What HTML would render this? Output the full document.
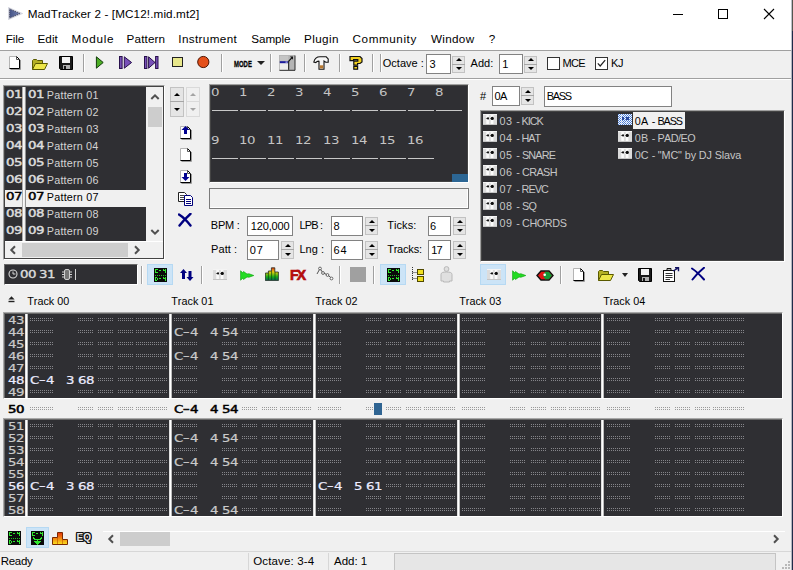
<!DOCTYPE html><html><head><meta charset="utf-8"><title>MadTracker 2</title><style>
*{box-sizing:border-box;margin:0;padding:0}
html,body{width:793px;height:570px;overflow:hidden;background:#f0f0f0}
body{position:relative;font-family:"Liberation Sans",sans-serif;font-size:11px;color:#000}
.a{position:absolute}
.t{position:absolute;white-space:nowrap;line-height:1}
.ui{font-family:"Liberation Sans",sans-serif;font-size:11.6px;color:#000;letter-spacing:-0.1px}
.th{font-family:"Liberation Sans",sans-serif;font-size:11px;color:#000}
.px{font-family:"DejaVu Sans","Liberation Sans",sans-serif;font-size:10.5px;line-height:12px;display:inline-block;transform:scaleX(1.27);transform-origin:0 0;white-space:pre;position:absolute}
.px i{display:inline-block;width:6.3px;text-align:center;font-style:normal}
.px i.h{transform:translate(0.4px,-1px) scaleX(1.45)}
.dark{background:#2f2f33}
.inp{position:absolute;background:#fff;border:1px solid #828282}
.inp span{position:absolute;left:4px;top:4px;line-height:1;font-size:11px;white-space:nowrap}
.spin{position:absolute;width:13px;background:#f0f0f0}
.spin i{position:absolute;left:0;width:13px;border:1px solid #adadad;background:#e1e1e1}
.spin b{position:absolute;left:3px;width:0;height:0;border-left:3.5px solid transparent;border-right:3.5px solid transparent}
.sep{position:absolute;width:1px;background:#a0a0a0;box-shadow:1px 0 0 #fff}
.dots{position:absolute;height:3px;background-image:radial-gradient(circle at 0.5px 0.5px,#85858a 0.6px,transparent 0.7px);background-size:2px 2px}
.ldots{position:absolute;height:3px;background-image:radial-gradient(circle at 0.5px 0.5px,#9a9a9a 0.55px,transparent 0.7px);background-size:2px 2px}
</style></head><body>
<div class="a" style="left:0;top:0;width:793px;height:50px;background:#fff"></div>
<svg class="a" style="left:8px;top:7px" width="15" height="13" viewBox="0 0 15 13"><defs><linearGradient id="ti" x1="0" y1="0" x2="1" y2="0"><stop offset="0" stop-color="#465488"/><stop offset="1" stop-color="#7482ae"/></linearGradient></defs><path d="M0.700 0.700 L14 6.500 L0.700 12.300 Z" fill="#d4d6e0" stroke="#d4d6e0" stroke-width="1.200"/><path d="M1.600 1.900 L12.200 6.500 L1.600 11.100 Z" fill="url(#ti)" stroke="#3c3c50" stroke-width="0.900" stroke-dasharray="1 1"/></svg>
<div class="t"  style="left:27.64px;top:8.25px;font-size:11.7px;letter-spacing:0.114px;color:#000;font-weight:normal;font-kerning:none;">MadTracker 2 - [MC12!.mid.mt2]</div>
<div class="a" style="left:673px;top:14px;width:10px;height:1px;background:#000"></div>
<div class="a" style="left:718px;top:9px;width:10px;height:10px;border:1px solid #000"></div>
<svg class="a" style="left:763px;top:8px" width="12" height="12" viewBox="0 0 12 12"><path d="M1 1 L11 11 M11 1 L1 11" stroke="#000" stroke-width="1.1" fill="none"/></svg>
<div class="t"  style="left:5.74px;top:33.35px;font-size:11.7px;letter-spacing:-0.091px;color:#000;font-weight:normal;font-kerning:none;">File</div>
<div class="t"  style="left:37.54px;top:33.35px;font-size:11.7px;letter-spacing:0.028px;color:#000;font-weight:normal;font-kerning:none;">Edit</div>
<div class="t"  style="left:71.44px;top:33.35px;font-size:11.7px;letter-spacing:0.741px;color:#000;font-weight:normal;font-kerning:none;">Module</div>
<div class="t"  style="left:126.54px;top:33.35px;font-size:11.7px;letter-spacing:0.150px;color:#000;font-weight:normal;font-kerning:none;">Pattern</div>
<div class="t"  style="left:178.32px;top:33.35px;font-size:11.7px;letter-spacing:0.366px;color:#000;font-weight:normal;font-kerning:none;">Instrument</div>
<div class="t"  style="left:251.27px;top:33.35px;font-size:11.7px;letter-spacing:-0.084px;color:#000;font-weight:normal;font-kerning:none;">Sample</div>
<div class="t"  style="left:304.04px;top:33.35px;font-size:11.7px;letter-spacing:0.379px;color:#000;font-weight:normal;font-kerning:none;">Plugin</div>
<div class="t"  style="left:352.61px;top:33.35px;font-size:11.7px;letter-spacing:0.569px;color:#000;font-weight:normal;font-kerning:none;">Community</div>
<div class="t"  style="left:430.95px;top:33.35px;font-size:11.7px;letter-spacing:0.322px;color:#000;font-weight:normal;font-kerning:none;">Window</div>
<div class="t"  style="left:488.72px;top:33.35px;font-size:11.7px;letter-spacing:0.000px;color:#000;font-weight:normal;font-kerning:none;">?</div>
<div class="a" style="left:0;top:50px;width:791px;height:1px;background:#a0a0a0"></div>
<div class="a" style="left:0;top:78px;width:791px;height:1px;background:#a0a0a0"></div>
<div class="a" style="left:0;top:79px;width:791px;height:1px;background:#fff"></div>
<svg class="a" style="left:9px;top:56px" width="12" height="14" viewBox="0 0 12 14"><path d="M0.5 0.5 H7.5 L10.5 3.5 V12.5 H0.5Z" fill="#fff" stroke="#b4b4b4" stroke-width="1"/><path d="M7.5 0.5 L10.5 3.5 V12.5 H0.5" fill="none" stroke="#000" stroke-width="1"/><path d="M7.5 0.5 V3.5 H10.5" fill="none" stroke="#555" stroke-width="1"/><path d="M11.5 4 V13.5 H1.5" fill="none" stroke="#9a9a9a" stroke-width="1"/></svg>
<svg class="a" style="left:32px;top:59px" width="16" height="11" viewBox="0 0 16 11"><path d="M0.5 10.5 V1.5 L1.5 0.5 H4.5 L5.5 1.5 H10.5 V4.5" fill="#b4b024" stroke="#5a5a00" stroke-width="1"/><path d="M0.5 10.5 L3.5 4.5 H15.5 L12.5 10.5Z" fill="#ece648" stroke="#5a5a00" stroke-width="1"/></svg>
<svg class="a" style="left:59px;top:56px" width="15" height="14" viewBox="0 0 15 14"><path d="M0.5 0.5 H13.5 V13.5 H1.5 L0.5 12.5Z" fill="#1a1a1a" stroke="#000" stroke-width="1"/><rect x="3" y="1" width="8" height="6" fill="#f4f4f4"/><rect x="4" y="9" width="7" height="4" fill="#b0b0b0"/><rect x="5" y="10" width="2" height="3" fill="#1a1a1a"/></svg>
<div class="sep" style="left:83px;top:54px;height:18px"></div>
<svg class="a" style="left:95px;top:56px" width="10" height="13" viewBox="0 0 10 13"><path d="M1.400 0.800 L8.200 6.500 L1.400 12.200Z" fill="#4cae24" stroke="#143c0c" stroke-width="1"/></svg>
<svg class="a" style="left:119px;top:56px" width="14" height="13" viewBox="0 0 14 13"><rect x="0.5" y="0.5" width="2.6" height="12" fill="#7850b8" stroke="#28104c" stroke-width="1"/><path d="M5.3 0.8 L12.6 6.5 L5.3 12.2Z" fill="#7850b8" stroke="#28104c" stroke-width="1"/></svg>
<svg class="a" style="left:144px;top:56px" width="15" height="13" viewBox="0 0 15 13"><rect x="0.5" y="0.5" width="2.4" height="12" fill="#7850b8" stroke="#28104c" stroke-width="1"/><path d="M4.6 0.8 L11 6.5 L4.6 12.2Z" fill="#7850b8" stroke="#28104c" stroke-width="1"/><rect x="11.6" y="0.5" width="2.4" height="12" fill="#7850b8" stroke="#28104c" stroke-width="1"/></svg>
<div class="a" style="left:172px;top:57px;width:11px;height:10px;background:#e8e88c;border:1px solid #222"></div>
<svg class="a" style="left:197px;top:55px" width="13" height="14" viewBox="0 0 13 14"><circle cx="6.3" cy="7" r="5.6" fill="#e4501a" stroke="#501400" stroke-width="1"/></svg>
<div class="sep" style="left:221px;top:54px;height:18px"></div>
<div class="t" style="left:233.6px;top:58.6px;font-size:9.6px;font-weight:bold;font-kerning:none;transform:scaleX(0.62);transform-origin:0 0;color:#000;-webkit-text-stroke:0.3px #000">MODE</div>
<div class="a" style="left:257px;top:61px;width:0;height:0;border-left:4px solid transparent;border-right:4px solid transparent;border-top:4.5px solid #222"></div>
<div class="sep" style="left:270px;top:54px;height:18px"></div>
<svg class="a" style="left:279px;top:55px" width="17" height="16" viewBox="0 0 17 16"><rect x="0" y="0" width="16" height="15.500" fill="#b4b4b4"/><rect x="0.800" y="0.800" width="8.500" height="5" fill="#c4c4c4"/><path d="M16 0.500V15.300H0.500" fill="none" stroke="#2c2c2c" stroke-width="1"/><rect x="0.800" y="8" width="8.400" height="6.600" fill="#ececec"/><rect x="0.800" y="6.200" width="8.400" height="2" fill="#1a1a9c"/><rect x="6.500" y="6.600" width="2" height="1" fill="#d0d0f0"/><path d="M9.700 6V14.800" stroke="#111" stroke-width="1"/><path d="M9.700 6.200 L12.800 2.800" stroke="#111" stroke-width="1.200" fill="none"/><path d="M11 1.600 H14 V4.800 Z" fill="#111"/></svg>
<div class="sep" style="left:304px;top:54px;height:18px"></div>
<svg class="a" style="left:313px;top:56px" width="16" height="14" viewBox="0 0 16 14"><path d="M0.800 6 C1.500 3 4 0.800 7 0.800 H13.200 L15.200 3 V6.200 H12.800 L11 5 V13.200 H6 V5.200 C4.500 5 3.600 5.600 2.800 6.600 Z" fill="#f6f6f6" stroke="#111" stroke-width="1.100"/><rect x="6.800" y="9.300" width="3.400" height="3.200" fill="#b87830"/></svg>
<div class="sep" style="left:339px;top:54px;height:18px"></div>
<svg class="a" style="left:349px;top:55px" width="14" height="15" viewBox="0 0 14 15"><path d="M1 1.5 H11 L13 3.5 V7 L11 8.5 H8.6 V10.2 H4.8 V6.2 H8.8 V4.6 H4.6 V5.6 H1Z" fill="#f2d020" stroke="#111" stroke-width="1.2"/><rect x="4.8" y="11.4" width="3.8" height="2.8" fill="#f2d020" stroke="#111" stroke-width="1.2"/></svg>
<div class="sep" style="left:372px;top:54px;height:18px"></div>
<div class="sep" style="left:380px;top:54px;height:18px"></div>
<div class="t"  style="left:382.78px;top:57.50px;font-size:11px;letter-spacing:0.009px;color:#000;font-weight:normal;font-kerning:none;">Octave :</div>
<div class="inp" style="left:426px;top:54px;width:25px;height:20px"></div><div class="t"  style="left:429.58px;top:58.50px;font-size:11px;letter-spacing:0.000px;color:#000;font-weight:normal;font-kerning:none;">3</div>
<div class="a" style="left:452px;top:55.5px;height:17.5px;width:13px;background:#e5e5e5;border:1px solid #c2c2c2"></div><div class="a" style="left:452px;top:63.75px;height:1px;width:13px;background:#a6a6a6"></div><div class="a" style="left:455.5px;top:58.075px;width:0;height:0;border-left:3px solid transparent;border-right:3px solid transparent;border-bottom:3.2px solid #000"></div><div class="a" style="left:455.5px;top:67.225px;width:0;height:0;border-left:3px solid transparent;border-right:3px solid transparent;border-top:3.2px solid #000"></div>
<div class="t"  style="left:470.58px;top:57.50px;font-size:11px;letter-spacing:-0.001px;color:#000;font-weight:normal;font-kerning:none;">Add:</div>
<div class="inp" style="left:499px;top:54px;width:24px;height:20px"></div><div class="t"  style="left:502.16px;top:58.50px;font-size:11px;letter-spacing:0.000px;color:#000;font-weight:normal;font-kerning:none;">1</div>
<div class="a" style="left:524px;top:55.5px;height:17.5px;width:13px;background:#e5e5e5;border:1px solid #c2c2c2"></div><div class="a" style="left:524px;top:63.75px;height:1px;width:13px;background:#a6a6a6"></div><div class="a" style="left:527.5px;top:58.075px;width:0;height:0;border-left:3px solid transparent;border-right:3px solid transparent;border-bottom:3.2px solid #000"></div><div class="a" style="left:527.5px;top:67.225px;width:0;height:0;border-left:3px solid transparent;border-right:3px solid transparent;border-top:3.2px solid #000"></div>
<div class="a" style="left:547px;top:57px;width:13px;height:13px;background:#fff;border:1px solid #333"></div>
<div class="t"  style="left:562.60px;top:57.50px;font-size:11px;letter-spacing:-0.784px;color:#000;font-weight:normal;font-kerning:none;">MCE</div>
<div class="a" style="left:595px;top:57px;width:13px;height:13px;background:#fff;border:1px solid #333"></div>
<svg class="a" style="left:595px;top:57px" width="13" height="13" viewBox="0 0 13 13"><path d="M2.8 6.4 L5.2 9 L10.2 3.2" fill="none" stroke="#222" stroke-width="1.2"/></svg>
<div class="t"  style="left:610.90px;top:57.50px;font-size:11px;letter-spacing:-0.318px;color:#000;font-weight:normal;font-kerning:none;">KJ</div>
<div class="a" style="left:3px;top:85px;width:162px;height:175px;background:#f0f0f0;border-top:1px solid #a0a0a0;border-left:1px solid #a0a0a0;border-right:1px solid #fff;border-bottom:1px solid #fff;"><div class="a" style="left:0;top:0;right:0;bottom:0;border:1px solid #444"></div></div>
<div class="a dark" style="left:5px;top:87px;width:141px;height:154px"></div>
<div class="a" style="left:22px;top:87px;width:4px;height:154px;background:linear-gradient(90deg,#8a8a8a,#fff 40%,#e8e8e8 70%,#555)"></div>
<span class="px" style="left:5.5px;top:88px;color:#dcdcdc;-webkit-text-stroke:0.45px #dcdcdc;"><i>0</i><i>1</i></span>
<span class="px" style="left:27.5px;top:88px;color:#dcdcdc;-webkit-text-stroke:0.45px #dcdcdc;"><i>0</i><i>1</i></span>
<div class="t"  style="left:46.81px;top:89.60px;font-size:10.8px;letter-spacing:0.209px;color:#d4d4d4;font-weight:normal;font-kerning:none;">Pattern 01</div>
<span class="px" style="left:5.5px;top:105px;color:#dcdcdc;-webkit-text-stroke:0.45px #dcdcdc;"><i>0</i><i>2</i></span>
<span class="px" style="left:27.5px;top:105px;color:#dcdcdc;-webkit-text-stroke:0.45px #dcdcdc;"><i>0</i><i>2</i></span>
<div class="t"  style="left:46.81px;top:106.60px;font-size:10.8px;letter-spacing:0.211px;color:#d4d4d4;font-weight:normal;font-kerning:none;">Pattern 02</div>
<span class="px" style="left:5.5px;top:122px;color:#dcdcdc;-webkit-text-stroke:0.45px #dcdcdc;"><i>0</i><i>3</i></span>
<span class="px" style="left:27.5px;top:122px;color:#dcdcdc;-webkit-text-stroke:0.45px #dcdcdc;"><i>0</i><i>3</i></span>
<div class="t"  style="left:46.81px;top:123.60px;font-size:10.8px;letter-spacing:0.203px;color:#d4d4d4;font-weight:normal;font-kerning:none;">Pattern 03</div>
<span class="px" style="left:5.5px;top:139px;color:#dcdcdc;-webkit-text-stroke:0.45px #dcdcdc;"><i>0</i><i>4</i></span>
<span class="px" style="left:27.5px;top:139px;color:#dcdcdc;-webkit-text-stroke:0.45px #dcdcdc;"><i>0</i><i>4</i></span>
<div class="t"  style="left:46.81px;top:140.60px;font-size:10.8px;letter-spacing:0.185px;color:#d4d4d4;font-weight:normal;font-kerning:none;">Pattern 04</div>
<span class="px" style="left:5.5px;top:156px;color:#dcdcdc;-webkit-text-stroke:0.45px #dcdcdc;"><i>0</i><i>5</i></span>
<span class="px" style="left:27.5px;top:156px;color:#dcdcdc;-webkit-text-stroke:0.45px #dcdcdc;"><i>0</i><i>5</i></span>
<div class="t"  style="left:46.81px;top:157.60px;font-size:10.8px;letter-spacing:0.201px;color:#d4d4d4;font-weight:normal;font-kerning:none;">Pattern 05</div>
<span class="px" style="left:5.5px;top:173px;color:#dcdcdc;-webkit-text-stroke:0.45px #dcdcdc;"><i>0</i><i>6</i></span>
<span class="px" style="left:27.5px;top:173px;color:#dcdcdc;-webkit-text-stroke:0.45px #dcdcdc;"><i>0</i><i>6</i></span>
<div class="t"  style="left:46.81px;top:174.60px;font-size:10.8px;letter-spacing:0.203px;color:#d4d4d4;font-weight:normal;font-kerning:none;">Pattern 06</div>
<div class="a" style="left:5px;top:190px;width:17px;height:17px;background:#f0f0f0"></div>
<div class="a" style="left:26px;top:190px;width:120px;height:17px;background:#f0f0f0"></div>
<span class="px" style="left:5.5px;top:190px;color:#000;-webkit-text-stroke:0.45px #000;"><i>0</i><i>7</i></span>
<span class="px" style="left:27.5px;top:190px;color:#000;-webkit-text-stroke:0.45px #000;"><i>0</i><i>7</i></span>
<div class="t"  style="left:46.81px;top:191.60px;font-size:10.8px;letter-spacing:0.211px;color:#000;font-weight:normal;font-kerning:none;">Pattern 07</div>
<span class="px" style="left:5.5px;top:207px;color:#dcdcdc;-webkit-text-stroke:0.45px #dcdcdc;"><i>0</i><i>8</i></span>
<span class="px" style="left:27.5px;top:207px;color:#dcdcdc;-webkit-text-stroke:0.45px #dcdcdc;"><i>0</i><i>8</i></span>
<div class="t"  style="left:46.81px;top:208.60px;font-size:10.8px;letter-spacing:0.202px;color:#d4d4d4;font-weight:normal;font-kerning:none;">Pattern 08</div>
<span class="px" style="left:5.5px;top:224px;color:#dcdcdc;-webkit-text-stroke:0.45px #dcdcdc;"><i>0</i><i>9</i></span>
<span class="px" style="left:27.5px;top:224px;color:#dcdcdc;-webkit-text-stroke:0.45px #dcdcdc;"><i>0</i><i>9</i></span>
<div class="t"  style="left:46.81px;top:225.60px;font-size:10.8px;letter-spacing:0.207px;color:#d4d4d4;font-weight:normal;font-kerning:none;">Pattern 09</div>
<div class="a" style="left:146px;top:87px;width:17px;height:154px;background:#f0f0f0"></div>
<div class="a" style="left:148px;top:107px;width:14px;height:20px;background:#cdcdcd"></div>
<svg class="a" style="left:149.5px;top:93px" width="10" height="8" viewBox="0 0 10 8"><path d="M1.3 6 L5 2.3 L8.7 6" fill="none" stroke="#505050" stroke-width="2"/></svg>
<svg class="a" style="left:149.5px;top:228px" width="10" height="8" viewBox="0 0 10 8"><path d="M1.3 2 L5 5.700 L8.7 2" fill="none" stroke="#505050" stroke-width="2"/></svg>
<div class="a" style="left:5px;top:241px;width:158px;height:17px;background:#f0f0f0;border-top:1px solid #fff"></div>
<div class="a" style="left:22px;top:243px;width:106px;height:14px;background:#cdcdcd"></div>
<svg class="a" style="left:9px;top:244.5px" width="8" height="10" viewBox="0 0 8 10"><path d="M6 1.3 L2.3 5 L6 8.700" fill="none" stroke="#505050" stroke-width="2"/></svg>
<svg class="a" style="left:133px;top:244.5px" width="8" height="10" viewBox="0 0 8 10"><path d="M2 1.3 L5.700 5 L2 8.700" fill="none" stroke="#505050" stroke-width="2"/></svg>
<div class="a" style="left:170px;top:87px;height:29.5px;width:13.5px;background:#e5e5e5;border:1px solid #c2c2c2"></div><div class="a" style="left:170px;top:101.25px;height:1px;width:13.5px;background:#a6a6a6"></div><div class="a" style="left:173.75px;top:92.575px;width:0;height:0;border-left:3px solid transparent;border-right:3px solid transparent;border-bottom:3.2px solid #000"></div><div class="a" style="left:173.75px;top:107.725px;width:0;height:0;border-left:3px solid transparent;border-right:3px solid transparent;border-top:3.2px solid #000"></div>
<div class="a" style="left:186px;top:87px;height:29.5px;width:13.5px;background:#f0f0f0;border:1px solid #dadada"></div><div class="a" style="left:186px;top:101.25px;height:1px;width:13.5px;background:#dadada"></div><div class="a" style="left:189.75px;top:92.575px;width:0;height:0;border-left:3px solid transparent;border-right:3px solid transparent;border-bottom:3.2px solid #a4a4a4"></div><div class="a" style="left:189.75px;top:107.725px;width:0;height:0;border-left:3px solid transparent;border-right:3px solid transparent;border-top:3.2px solid #a4a4a4"></div>
<svg class="a" style="left:180px;top:126px" width="12" height="14" viewBox="0 0 12 14"><path d="M0.5 0.5 H7.5 L10.5 3.5 V12.5 H0.5Z" fill="#fff" stroke="#b4b4b4" stroke-width="1"/><path d="M7.5 0.5 L10.5 3.5 V12.5 H0.5" fill="none" stroke="#000" stroke-width="1"/><path d="M7.5 0.5 V3.5 H10.5" fill="none" stroke="#555" stroke-width="1"/><path d="M11.5 4 V13.5 H1.5" fill="none" stroke="#9a9a9a" stroke-width="1"/></svg>
<svg class="a" style="left:180px;top:126px" width="12" height="10" viewBox="0 0 12 10"><path d="M5.5 0 L9.5 4 H7 V8 H4 V4 H1.5Z" fill="#000090"/></svg>
<svg class="a" style="left:180px;top:148px" width="12" height="14" viewBox="0 0 12 14"><path d="M0.5 0.5 H7.5 L10.5 3.5 V12.5 H0.5Z" fill="#fff" stroke="#b4b4b4" stroke-width="1"/><path d="M7.5 0.5 L10.5 3.5 V12.5 H0.5" fill="none" stroke="#000" stroke-width="1"/><path d="M7.5 0.5 V3.5 H10.5" fill="none" stroke="#555" stroke-width="1"/><path d="M11.5 4 V13.5 H1.5" fill="none" stroke="#9a9a9a" stroke-width="1"/></svg>
<svg class="a" style="left:180px;top:170px" width="12" height="14" viewBox="0 0 12 14"><path d="M0.5 0.5 H7.5 L10.5 3.5 V12.5 H0.5Z" fill="#fff" stroke="#b4b4b4" stroke-width="1"/><path d="M7.5 0.5 L10.5 3.5 V12.5 H0.5" fill="none" stroke="#000" stroke-width="1"/><path d="M7.5 0.5 V3.5 H10.5" fill="none" stroke="#555" stroke-width="1"/><path d="M11.5 4 V13.5 H1.5" fill="none" stroke="#9a9a9a" stroke-width="1"/></svg>
<svg class="a" style="left:180px;top:172px" width="12" height="10" viewBox="0 0 12 10"><path d="M5.5 9 L9.5 5 H7 V1 H4 V5 H1.5Z" fill="#000090"/></svg>
<svg class="a" style="left:178px;top:192px" width="16" height="14" viewBox="0 0 16 14"><path d="M0.5 0.5 H6.5 L8.5 2.5 V9.5 H0.5Z" fill="#fff" stroke="#222"/><path d="M2 3.5H6M2 5.5H7M2 7.5H7" stroke="#444" stroke-width="1"/><path d="M6.5 3.5 H12.5 L14.5 5.5 V13.5 H6.5Z" fill="#fff" stroke="#00007a"/><path d="M8 7.5H13M8 9.5H13M8 11.5H13" stroke="#00007a" stroke-width="1"/></svg>
<svg class="a" style="left:178px;top:213px" width="15" height="14" viewBox="0 0 15 14"><path d="M1 1.5 C5 4 9 8 12.5 12.5 M12.5 0.8 C9 4 5 8 1.5 12.5" stroke="#000080" stroke-width="2.400" fill="none" stroke-linecap="round"/></svg>
<div class="a" style="left:209px;top:84px;width:260px;height:99px;background:#2f2f33;border-top:1px solid #a0a0a0;border-left:1px solid #a0a0a0;border-right:1px solid #fff;border-bottom:1px solid #fff;"><div class="a" style="left:0;top:0;right:0;bottom:0;border:1px solid #444"></div></div>
<span class="px" style="left:211px;top:86px;color:#c4c4c4;"><i>0</i></span>
<div class="a" style="left:212px;top:110px;width:26px;height:1px;background:#c8c8c8"></div>
<span class="px" style="left:239px;top:86px;color:#c4c4c4;"><i>1</i></span>
<div class="a" style="left:240px;top:110px;width:26px;height:1px;background:#c8c8c8"></div>
<span class="px" style="left:267px;top:86px;color:#c4c4c4;"><i>2</i></span>
<div class="a" style="left:268px;top:110px;width:26px;height:1px;background:#c8c8c8"></div>
<span class="px" style="left:295px;top:86px;color:#c4c4c4;"><i>3</i></span>
<div class="a" style="left:296px;top:110px;width:26px;height:1px;background:#c8c8c8"></div>
<span class="px" style="left:323px;top:86px;color:#c4c4c4;"><i>4</i></span>
<div class="a" style="left:324px;top:110px;width:26px;height:1px;background:#c8c8c8"></div>
<span class="px" style="left:351px;top:86px;color:#c4c4c4;"><i>5</i></span>
<div class="a" style="left:352px;top:110px;width:26px;height:1px;background:#c8c8c8"></div>
<span class="px" style="left:379px;top:86px;color:#c4c4c4;"><i>6</i></span>
<div class="a" style="left:380px;top:110px;width:26px;height:1px;background:#c8c8c8"></div>
<span class="px" style="left:407px;top:86px;color:#c4c4c4;"><i>7</i></span>
<div class="a" style="left:408px;top:110px;width:26px;height:1px;background:#c8c8c8"></div>
<span class="px" style="left:435px;top:86px;color:#c4c4c4;"><i>8</i></span>
<div class="a" style="left:436px;top:110px;width:26px;height:1px;background:#c8c8c8"></div>
<span class="px" style="left:211px;top:134px;color:#c4c4c4;"><i>9</i></span>
<div class="a" style="left:212px;top:158px;width:26px;height:1px;background:#c8c8c8"></div>
<span class="px" style="left:239px;top:134px;color:#c4c4c4;"><i>1</i><i>0</i></span>
<div class="a" style="left:240px;top:158px;width:26px;height:1px;background:#c8c8c8"></div>
<span class="px" style="left:267px;top:134px;color:#c4c4c4;"><i>1</i><i>1</i></span>
<div class="a" style="left:268px;top:158px;width:26px;height:1px;background:#c8c8c8"></div>
<span class="px" style="left:295px;top:134px;color:#c4c4c4;"><i>1</i><i>2</i></span>
<div class="a" style="left:296px;top:158px;width:26px;height:1px;background:#c8c8c8"></div>
<span class="px" style="left:323px;top:134px;color:#c4c4c4;"><i>1</i><i>3</i></span>
<div class="a" style="left:324px;top:158px;width:26px;height:1px;background:#c8c8c8"></div>
<span class="px" style="left:351px;top:134px;color:#c4c4c4;"><i>1</i><i>4</i></span>
<div class="a" style="left:352px;top:158px;width:26px;height:1px;background:#c8c8c8"></div>
<span class="px" style="left:379px;top:134px;color:#c4c4c4;"><i>1</i><i>5</i></span>
<div class="a" style="left:380px;top:158px;width:26px;height:1px;background:#c8c8c8"></div>
<span class="px" style="left:407px;top:134px;color:#c4c4c4;"><i>1</i><i>6</i></span>
<div class="a" style="left:408px;top:158px;width:26px;height:1px;background:#c8c8c8"></div>
<div class="a" style="left:452px;top:174px;width:16px;height:8px;background:#2c6694"></div>
<div class="a" style="left:209px;top:188px;width:260px;height:21px;background:#f1f1f1;border:1px solid #7a7a7a;box-shadow:inset -1px -1px 0 #fff"></div>
<div class="t"  style="left:210.80px;top:219.50px;font-size:11px;letter-spacing:-0.236px;color:#000;font-weight:normal;font-kerning:none;">BPM :</div>
<div class="inp" style="left:247px;top:216px;width:46px;height:20px"></div><div class="t"  style="left:250.86px;top:220.50px;font-size:11px;letter-spacing:-0.166px;color:#000;font-weight:normal;font-kerning:none;">120,000</div>
<div class="t"  style="left:299.40px;top:219.50px;font-size:11px;letter-spacing:-0.824px;color:#000;font-weight:normal;font-kerning:none;">LPB :</div>
<div class="inp" style="left:331px;top:216px;width:32px;height:20px"></div><div class="t"  style="left:333.52px;top:220.50px;font-size:11px;letter-spacing:0.000px;color:#000;font-weight:normal;font-kerning:none;">8</div>
<div class="a" style="left:365px;top:217px;height:17.5px;width:13px;background:#e5e5e5;border:1px solid #c2c2c2"></div><div class="a" style="left:365px;top:225.25px;height:1px;width:13px;background:#a6a6a6"></div><div class="a" style="left:368.5px;top:219.575px;width:0;height:0;border-left:3px solid transparent;border-right:3px solid transparent;border-bottom:3.2px solid #000"></div><div class="a" style="left:368.5px;top:228.725px;width:0;height:0;border-left:3px solid transparent;border-right:3px solid transparent;border-top:3.2px solid #000"></div>
<div class="t"  style="left:387.15px;top:219.50px;font-size:11px;letter-spacing:0.086px;color:#000;font-weight:normal;font-kerning:none;">Ticks:</div>
<div class="inp" style="left:428px;top:216px;width:23px;height:20px"></div><div class="t"  style="left:430.04px;top:220.50px;font-size:11px;letter-spacing:0.000px;color:#000;font-weight:normal;font-kerning:none;">6</div>
<div class="a" style="left:453px;top:217px;height:17.5px;width:13px;background:#e5e5e5;border:1px solid #c2c2c2"></div><div class="a" style="left:453px;top:225.25px;height:1px;width:13px;background:#a6a6a6"></div><div class="a" style="left:456.5px;top:219.575px;width:0;height:0;border-left:3px solid transparent;border-right:3px solid transparent;border-bottom:3.2px solid #000"></div><div class="a" style="left:456.5px;top:228.725px;width:0;height:0;border-left:3px solid transparent;border-right:3px solid transparent;border-top:3.2px solid #000"></div>
<div class="t"  style="left:211.10px;top:243.50px;font-size:11px;letter-spacing:0.046px;color:#000;font-weight:normal;font-kerning:none;">Patt :</div>
<div class="inp" style="left:247px;top:240px;width:32px;height:20px"></div><div class="t"  style="left:249.77px;top:244.50px;font-size:11px;letter-spacing:0.948px;color:#000;font-weight:normal;font-kerning:none;">07</div>
<div class="a" style="left:281px;top:241px;height:17.5px;width:13px;background:#e5e5e5;border:1px solid #c2c2c2"></div><div class="a" style="left:281px;top:249.25px;height:1px;width:13px;background:#a6a6a6"></div><div class="a" style="left:284.5px;top:243.575px;width:0;height:0;border-left:3px solid transparent;border-right:3px solid transparent;border-bottom:3.2px solid #000"></div><div class="a" style="left:284.5px;top:252.725px;width:0;height:0;border-left:3px solid transparent;border-right:3px solid transparent;border-top:3.2px solid #000"></div>
<div class="t"  style="left:299.40px;top:243.50px;font-size:11px;letter-spacing:0.035px;color:#000;font-weight:normal;font-kerning:none;">Lng :</div>
<div class="inp" style="left:331px;top:240px;width:32px;height:20px"></div><div class="t"  style="left:333.44px;top:244.50px;font-size:11px;letter-spacing:0.846px;color:#000;font-weight:normal;font-kerning:none;">64</div>
<div class="a" style="left:365px;top:241px;height:17.5px;width:13px;background:#e5e5e5;border:1px solid #c2c2c2"></div><div class="a" style="left:365px;top:249.25px;height:1px;width:13px;background:#a6a6a6"></div><div class="a" style="left:368.5px;top:243.575px;width:0;height:0;border-left:3px solid transparent;border-right:3px solid transparent;border-bottom:3.2px solid #000"></div><div class="a" style="left:368.5px;top:252.725px;width:0;height:0;border-left:3px solid transparent;border-right:3px solid transparent;border-top:3.2px solid #000"></div>
<div class="t"  style="left:387.15px;top:243.50px;font-size:11px;letter-spacing:-0.201px;color:#000;font-weight:normal;font-kerning:none;">Tracks:</div>
<div class="inp" style="left:428px;top:240px;width:23px;height:20px"></div><div class="t"  style="left:431.16px;top:244.50px;font-size:11px;letter-spacing:-0.744px;color:#000;font-weight:normal;font-kerning:none;">17</div>
<div class="a" style="left:453px;top:241px;height:17.5px;width:13px;background:#e5e5e5;border:1px solid #c2c2c2"></div><div class="a" style="left:453px;top:249.25px;height:1px;width:13px;background:#a6a6a6"></div><div class="a" style="left:456.5px;top:243.575px;width:0;height:0;border-left:3px solid transparent;border-right:3px solid transparent;border-bottom:3.2px solid #000"></div><div class="a" style="left:456.5px;top:252.725px;width:0;height:0;border-left:3px solid transparent;border-right:3px solid transparent;border-top:3.2px solid #000"></div>
<div class="t"  style="left:479.95px;top:90.50px;font-size:11px;letter-spacing:0.000px;color:#000;font-weight:normal;font-kerning:none;">#</div>
<div class="inp" style="left:492px;top:86px;width:28px;height:20px"></div><div class="t"  style="left:494.57px;top:90.50px;font-size:11px;letter-spacing:-0.603px;color:#000;font-weight:normal;font-kerning:none;">0A</div>
<div class="a" style="left:521.3px;top:87px;height:17.5px;width:13px;background:#e5e5e5;border:1px solid #c2c2c2"></div><div class="a" style="left:521.3px;top:95.25px;height:1px;width:13px;background:#a6a6a6"></div><div class="a" style="left:524.8px;top:89.575px;width:0;height:0;border-left:3px solid transparent;border-right:3px solid transparent;border-bottom:3.2px solid #000"></div><div class="a" style="left:524.8px;top:98.725px;width:0;height:0;border-left:3px solid transparent;border-right:3px solid transparent;border-top:3.2px solid #000"></div>
<div class="inp" style="left:544px;top:86px;width:128px;height:21px"></div><div class="t"  style="left:546.70px;top:90.50px;font-size:11px;letter-spacing:-1.347px;color:#000;font-weight:normal;font-kerning:none;">BASS</div>
<div class="a" style="left:480px;top:110px;width:305px;height:152px;background:#2f2f33;border-top:1px solid #a0a0a0;border-left:1px solid #a0a0a0;border-right:1px solid #fff;border-bottom:1px solid #fff;"><div class="a" style="left:0;top:0;right:0;bottom:0;border:1px solid #444"></div></div>
<svg class="a" style="left:483px;top:114px" width="14" height="11" viewBox="0 0 14 11"><rect width="14" height="11" fill="#dcdcdc"/><rect x="0" y="0" width="14" height="1" fill="#f4f4f4"/><rect x="0" y="10" width="14" height="1" fill="#c4c4c4"/><rect x="3.300" y="1" width="2.600" height="9" fill="#fbfbfb"/><rect x="7.800" y="1" width="2.600" height="9" fill="#fbfbfb"/><path d="M2.600 4.600 L5.500 3.300 L5.800 5.300 Z" fill="#222"/><circle cx="5" cy="4.500" r="1" fill="#111"/><path d="M7 4.700 L9 3.500 V5.500Z" fill="#333"/><circle cx="9.300" cy="4.400" r="1.550" fill="#0c0c0c"/></svg>
<div class="t"  style="left:499.38px;top:115.60px;font-size:10.8px;letter-spacing:0.597px;color:#c6c6c6;font-weight:normal;font-kerning:none;">03 -</div>
<div class="t"  style="left:521.61px;top:115.60px;font-size:10.8px;letter-spacing:-1.033px;color:#c6c6c6;font-weight:normal;font-kerning:none;">KICK</div>
<svg class="a" style="left:483px;top:131px" width="14" height="11" viewBox="0 0 14 11"><rect width="14" height="11" fill="#dcdcdc"/><rect x="0" y="0" width="14" height="1" fill="#f4f4f4"/><rect x="0" y="10" width="14" height="1" fill="#c4c4c4"/><rect x="3.300" y="1" width="2.600" height="9" fill="#fbfbfb"/><rect x="7.800" y="1" width="2.600" height="9" fill="#fbfbfb"/><path d="M2.600 4.600 L5.500 3.300 L5.800 5.300 Z" fill="#222"/><circle cx="5" cy="4.500" r="1" fill="#111"/><path d="M7 4.700 L9 3.500 V5.500Z" fill="#333"/><circle cx="9.300" cy="4.400" r="1.550" fill="#0c0c0c"/></svg>
<div class="t"  style="left:499.38px;top:132.60px;font-size:10.8px;letter-spacing:0.597px;color:#c6c6c6;font-weight:normal;font-kerning:none;">04 -</div>
<div class="t"  style="left:521.61px;top:132.60px;font-size:10.8px;letter-spacing:-1.083px;color:#c6c6c6;font-weight:normal;font-kerning:none;">HAT</div>
<svg class="a" style="left:483px;top:148px" width="14" height="11" viewBox="0 0 14 11"><rect width="14" height="11" fill="#dcdcdc"/><rect x="0" y="0" width="14" height="1" fill="#f4f4f4"/><rect x="0" y="10" width="14" height="1" fill="#c4c4c4"/><rect x="3.300" y="1" width="2.600" height="9" fill="#fbfbfb"/><rect x="7.800" y="1" width="2.600" height="9" fill="#fbfbfb"/><path d="M2.600 4.600 L5.500 3.300 L5.800 5.300 Z" fill="#222"/><circle cx="5" cy="4.500" r="1" fill="#111"/><path d="M7 4.700 L9 3.500 V5.500Z" fill="#333"/><circle cx="9.300" cy="4.400" r="1.550" fill="#0c0c0c"/></svg>
<div class="t"  style="left:499.38px;top:149.60px;font-size:10.8px;letter-spacing:0.597px;color:#c6c6c6;font-weight:normal;font-kerning:none;">05 -</div>
<div class="t"  style="left:522.01px;top:149.60px;font-size:10.8px;letter-spacing:-0.839px;color:#c6c6c6;font-weight:normal;font-kerning:none;">SNARE</div>
<svg class="a" style="left:483px;top:165px" width="14" height="11" viewBox="0 0 14 11"><rect width="14" height="11" fill="#dcdcdc"/><rect x="0" y="0" width="14" height="1" fill="#f4f4f4"/><rect x="0" y="10" width="14" height="1" fill="#c4c4c4"/><rect x="3.300" y="1" width="2.600" height="9" fill="#fbfbfb"/><rect x="7.800" y="1" width="2.600" height="9" fill="#fbfbfb"/><path d="M2.600 4.600 L5.500 3.300 L5.800 5.300 Z" fill="#222"/><circle cx="5" cy="4.500" r="1" fill="#111"/><path d="M7 4.700 L9 3.500 V5.500Z" fill="#333"/><circle cx="9.300" cy="4.400" r="1.550" fill="#0c0c0c"/></svg>
<div class="t"  style="left:499.38px;top:166.60px;font-size:10.8px;letter-spacing:0.597px;color:#c6c6c6;font-weight:normal;font-kerning:none;">06 -</div>
<div class="t"  style="left:521.95px;top:166.60px;font-size:10.8px;letter-spacing:-0.544px;color:#c6c6c6;font-weight:normal;font-kerning:none;">CRASH</div>
<svg class="a" style="left:483px;top:182px" width="14" height="11" viewBox="0 0 14 11"><rect width="14" height="11" fill="#dcdcdc"/><rect x="0" y="0" width="14" height="1" fill="#f4f4f4"/><rect x="0" y="10" width="14" height="1" fill="#c4c4c4"/><rect x="3.300" y="1" width="2.600" height="9" fill="#fbfbfb"/><rect x="7.800" y="1" width="2.600" height="9" fill="#fbfbfb"/><path d="M2.600 4.600 L5.500 3.300 L5.800 5.300 Z" fill="#222"/><circle cx="5" cy="4.500" r="1" fill="#111"/><path d="M7 4.700 L9 3.500 V5.500Z" fill="#333"/><circle cx="9.300" cy="4.400" r="1.550" fill="#0c0c0c"/></svg>
<div class="t"  style="left:499.38px;top:183.60px;font-size:10.8px;letter-spacing:0.597px;color:#c6c6c6;font-weight:normal;font-kerning:none;">07 -</div>
<div class="t"  style="left:521.61px;top:183.60px;font-size:10.8px;letter-spacing:-0.936px;color:#c6c6c6;font-weight:normal;font-kerning:none;">REVC</div>
<svg class="a" style="left:483px;top:199px" width="14" height="11" viewBox="0 0 14 11"><rect width="14" height="11" fill="#dcdcdc"/><rect x="0" y="0" width="14" height="1" fill="#f4f4f4"/><rect x="0" y="10" width="14" height="1" fill="#c4c4c4"/><rect x="3.300" y="1" width="2.600" height="9" fill="#fbfbfb"/><rect x="7.800" y="1" width="2.600" height="9" fill="#fbfbfb"/><path d="M2.600 4.600 L5.500 3.300 L5.800 5.300 Z" fill="#222"/><circle cx="5" cy="4.500" r="1" fill="#111"/><path d="M7 4.700 L9 3.500 V5.500Z" fill="#333"/><circle cx="9.300" cy="4.400" r="1.550" fill="#0c0c0c"/></svg>
<div class="t"  style="left:499.38px;top:200.60px;font-size:10.8px;letter-spacing:0.597px;color:#c6c6c6;font-weight:normal;font-kerning:none;">08 -</div>
<div class="t"  style="left:522.01px;top:200.60px;font-size:10.8px;letter-spacing:-0.697px;color:#c6c6c6;font-weight:normal;font-kerning:none;">SQ</div>
<svg class="a" style="left:483px;top:216px" width="14" height="11" viewBox="0 0 14 11"><rect width="14" height="11" fill="#dcdcdc"/><rect x="0" y="0" width="14" height="1" fill="#f4f4f4"/><rect x="0" y="10" width="14" height="1" fill="#c4c4c4"/><rect x="3.300" y="1" width="2.600" height="9" fill="#fbfbfb"/><rect x="7.800" y="1" width="2.600" height="9" fill="#fbfbfb"/><path d="M2.600 4.600 L5.500 3.300 L5.800 5.300 Z" fill="#222"/><circle cx="5" cy="4.500" r="1" fill="#111"/><path d="M7 4.700 L9 3.500 V5.500Z" fill="#333"/><circle cx="9.300" cy="4.400" r="1.550" fill="#0c0c0c"/></svg>
<div class="t"  style="left:499.38px;top:217.60px;font-size:10.8px;letter-spacing:0.597px;color:#c6c6c6;font-weight:normal;font-kerning:none;">09 -</div>
<div class="t"  style="left:521.95px;top:217.60px;font-size:10.8px;letter-spacing:-0.352px;color:#c6c6c6;font-weight:normal;font-kerning:none;">CHORDS</div>
<svg class="a" style="left:618px;top:114px" width="14" height="11" viewBox="0 0 14 11" shape-rendering="crispEdges"><defs><pattern id="dz" width="2" height="2" patternUnits="userSpaceOnUse"><rect width="2" height="2" fill="#f4f8ff"/><rect x="0" y="0" width="1" height="1" fill="#4f80d4"/><rect x="1" y="1" width="1" height="1" fill="#4f80d4"/></pattern></defs><rect width="14" height="11" fill="url(#dz)"/><rect x="4" y="3" width="2" height="3" fill="#27479c"/><rect x="8" y="3" width="3" height="3" fill="#27479c"/><rect x="3" y="1" width="1" height="9" fill="#f4f8ff" opacity="0.6"/><rect x="8" y="7" width="1" height="3" fill="#f4f8ff" opacity="0.6"/></svg>
<div class="a" style="left:633px;top:112px;width:52px;height:17px;background:#f0f0f0"></div>
<div class="t"  style="left:634.68px;top:115.60px;font-size:10.8px;letter-spacing:0.265px;color:#000;font-weight:normal;font-kerning:none;">0A -</div>
<div class="t"  style="left:657.41px;top:115.60px;font-size:10.8px;letter-spacing:-1.077px;color:#000;font-weight:normal;font-kerning:none;">BASS</div>
<svg class="a" style="left:618px;top:131px" width="14" height="11" viewBox="0 0 14 11"><rect width="14" height="11" fill="#dcdcdc"/><rect x="0" y="0" width="14" height="1" fill="#f4f4f4"/><rect x="0" y="10" width="14" height="1" fill="#c4c4c4"/><rect x="3.300" y="1" width="2.600" height="9" fill="#fbfbfb"/><rect x="7.800" y="1" width="2.600" height="9" fill="#fbfbfb"/><path d="M2.600 4.600 L5.500 3.300 L5.800 5.300 Z" fill="#222"/><circle cx="5" cy="4.500" r="1" fill="#111"/><path d="M7 4.700 L9 3.500 V5.500Z" fill="#333"/><circle cx="9.300" cy="4.400" r="1.550" fill="#0c0c0c"/></svg>
<div class="t"  style="left:634.68px;top:132.60px;font-size:10.8px;letter-spacing:0.265px;color:#c6c6c6;font-weight:normal;font-kerning:none;">0B -</div>
<div class="t"  style="left:657.41px;top:132.60px;font-size:10.8px;letter-spacing:-0.522px;color:#c6c6c6;font-weight:normal;font-kerning:none;">PAD/EO</div>
<svg class="a" style="left:618px;top:148px" width="14" height="11" viewBox="0 0 14 11"><rect width="14" height="11" fill="#dcdcdc"/><rect x="0" y="0" width="14" height="1" fill="#f4f4f4"/><rect x="0" y="10" width="14" height="1" fill="#c4c4c4"/><rect x="3.300" y="1" width="2.600" height="9" fill="#fbfbfb"/><rect x="7.800" y="1" width="2.600" height="9" fill="#fbfbfb"/><path d="M2.600 4.600 L5.500 3.300 L5.800 5.300 Z" fill="#222"/><circle cx="5" cy="4.500" r="1" fill="#111"/><path d="M7 4.700 L9 3.500 V5.500Z" fill="#333"/><circle cx="9.300" cy="4.400" r="1.550" fill="#0c0c0c"/></svg>
<div class="t"  style="left:634.68px;top:149.60px;font-size:10.8px;letter-spacing:0.066px;color:#c6c6c6;font-weight:normal;font-kerning:none;">0C -</div>
<div class="t"  style="left:657.84px;top:149.60px;font-size:10.8px;letter-spacing:-0.109px;color:#c6c6c6;font-weight:normal;font-kerning:none;">&quot;MC&quot; by DJ Slava</div>
<div class="a" style="left:4px;top:264px;width:134px;height:21px;background:#2f2f33;border-top:1px solid #696969;border-left:1px solid #696969;border-right:1px solid #fff;border-bottom:1px solid #fff"></div>
<svg class="a" style="left:8px;top:269px" width="10" height="10" viewBox="0 0 10 10"><circle cx="5" cy="5" r="4" fill="none" stroke="#d8d8d8" stroke-width="1.1"/><path d="M5 2.5V5H7.4" stroke="#d8d8d8" fill="none"/></svg>
<span class="px" style="left:20px;top:268px;color:#dcdcdc;-webkit-text-stroke:0.35px #dcdcdc;"><i>0</i><i>0</i></span>
<span class="px" style="left:39px;top:268px;color:#dcdcdc;-webkit-text-stroke:0.35px #dcdcdc;"><i>3</i><i>1</i></span>
<svg class="a" style="left:62px;top:269px" width="10" height="11" viewBox="0 0 10 11"><rect x="2.5" y="0.5" width="5" height="10" rx="1.5" fill="#777" stroke="#d0d0d0"/><path d="M0 3H2M0 5.5H2M0 8H2M8 3H10M8 5.5H10M8 8H10" stroke="#d0d0d0"/></svg>
<div class="a" style="left:75px;top:269px;width:1px;height:11px;background:#d0d0d0"></div>
<div class="sep" style="left:141px;top:266px;height:18px"></div>
<div class="a" style="left:147px;top:264px;width:26px;height:21px;background:#cce4f7;border:1px solid #b6d9f3"></div>
<svg class="a" style="left:154px;top:268px" width="13" height="14" viewBox="0 0 13 14" shape-rendering="crispEdges"><rect width="13" height="14" fill="#0a0a0a"/><rect x="1" y="1" width="3" height="1" fill="#2fe62f"/><rect x="1" y="2" width="1" height="1" fill="#2fe62f"/><rect x="1" y="3" width="1" height="1" fill="#2fe62f"/><rect x="1" y="4" width="3" height="1" fill="#2fe62f"/><rect x="5" y="2" width="2" height="1" fill="#2fe62f"/><rect x="9" y="1" width="1" height="1" fill="#2fe62f"/><rect x="11" y="1" width="1" height="1" fill="#2fe62f"/><rect x="9" y="2" width="3" height="1" fill="#2fe62f"/><rect x="11" y="3" width="1" height="1" fill="#2fe62f"/><rect x="11" y="4" width="1" height="1" fill="#2fe62f"/><rect x="1" y="6.5" width="1" height="1" fill="#25b825"/><rect x="3" y="6.5" width="1" height="1" fill="#25b825"/><rect x="5" y="6.5" width="1" height="1" fill="#25b825"/><rect x="7" y="6.5" width="1" height="1" fill="#25b825"/><rect x="9" y="6.5" width="1" height="1" fill="#25b825"/><rect x="11" y="6.5" width="1" height="1" fill="#25b825"/><rect x="1" y="9" width="2" height="1" fill="#2fe62f"/><rect x="1" y="10" width="1" height="1" fill="#2fe62f"/><rect x="3" y="10" width="1" height="1" fill="#2fe62f"/><rect x="1" y="11" width="1" height="1" fill="#2fe62f"/><rect x="3" y="11" width="1" height="1" fill="#2fe62f"/><rect x="1" y="12" width="2" height="1" fill="#2fe62f"/><rect x="5" y="10" width="2" height="1" fill="#2fe62f"/><rect x="9" y="9" width="1" height="1" fill="#2fe62f"/><rect x="11" y="9" width="1" height="1" fill="#2fe62f"/><rect x="9" y="10" width="3" height="1" fill="#2fe62f"/><rect x="11" y="11" width="1" height="1" fill="#2fe62f"/><rect x="11" y="12" width="1" height="1" fill="#2fe62f"/></svg>
<svg class="a" style="left:180px;top:268px" width="14" height="14" viewBox="0 0 14 14"><path d="M3.5 1 L7 5 H5 V11 H2 V5 H0Z" fill="#000080"/><path d="M10 13 L13.5 9 H11.5 V3 H8.5 V9 H6.5Z" fill="#000080"/></svg>
<div class="sep" style="left:201px;top:266px;height:18px"></div>
<svg class="a" style="left:213px;top:269px" width="14" height="11" viewBox="0 0 14 11"><rect width="14" height="11" fill="#dcdcdc"/><rect x="0" y="0" width="14" height="1" fill="#f4f4f4"/><rect x="0" y="10" width="14" height="1" fill="#c4c4c4"/><rect x="3.300" y="1" width="2.600" height="9" fill="#fbfbfb"/><rect x="7.800" y="1" width="2.600" height="9" fill="#fbfbfb"/><path d="M2.600 4.600 L5.500 3.300 L5.800 5.300 Z" fill="#222"/><circle cx="5" cy="4.500" r="1" fill="#111"/><path d="M7 4.700 L9 3.500 V5.500Z" fill="#333"/><circle cx="9.300" cy="4.400" r="1.550" fill="#0c0c0c"/></svg>
<svg class="a" style="left:239.5px;top:269.5px" width="15" height="11" viewBox="0 0 15 11"><path d="M0.600 0.800 L2.500 2.600 L3.600 1.600 L7 4 L9 3.800 L13.800 5.500 L9 7.200 L7 7 L3.600 9.400 L2.500 8.400 L0.600 10.200Z" fill="#22dc22" stroke="#14a814" stroke-width="0.700"/></svg>
<svg class="a" style="left:265px;top:267px" width="14" height="14" viewBox="0 0 14 14"><defs><linearGradient id="gb" gradientUnits="userSpaceOnUse" x1="0" y1="0" x2="0" y2="14"><stop offset="0" stop-color="#e01010"/><stop offset="0.35" stop-color="#e8d010"/><stop offset="0.7" stop-color="#18b018"/><stop offset="0.92" stop-color="#0a6a50"/><stop offset="1" stop-color="#083070"/></linearGradient></defs><path d="M0.400 13.600 V6 H3.400 V4 H6.400 V0.800 H9.800 V5 H13.400 V13.600Z" fill="url(#gb)" stroke="#203020" stroke-width="0.800"/><path d="M3.400 6V13M6.600 4V13M10 5V13" stroke="#104010" stroke-width="0.700"/></svg>
<div class="t" style="left:290px;top:267.500px;font-size:14px;font-weight:bold;color:#b40c0c;letter-spacing:-1.800px;font-kerning:none;-webkit-text-stroke:0.700px #b40c0c">FX</div>
<svg class="a" style="left:316px;top:266px" width="18" height="15" viewBox="0 0 18 15"><path d="M1 8 L4 2.5 L7 7 L11 8.5 L16 12.5" fill="none" stroke="#555" stroke-width="1"/><circle cx="4" cy="2.5" r="1.4" fill="#fff" stroke="#444" stroke-width="0.8"/><circle cx="7" cy="7" r="1.4" fill="#fff" stroke="#444" stroke-width="0.8"/><circle cx="11.5" cy="9" r="1.4" fill="#fff" stroke="#444" stroke-width="0.8"/><circle cx="15.5" cy="12.5" r="1.4" fill="#fff" stroke="#444" stroke-width="0.8"/></svg>
<div class="sep" style="left:339px;top:266px;height:18px"></div>
<div class="a" style="left:350px;top:267px;width:16px;height:15px;background:#a0a0a0"></div>
<div class="sep" style="left:373px;top:266px;height:18px"></div>
<div class="a" style="left:380px;top:264px;width:26px;height:21px;background:#cce4f7;border:1px solid #b6d9f3"></div>
<svg class="a" style="left:387px;top:268px" width="13" height="14" viewBox="0 0 13 14" shape-rendering="crispEdges"><rect width="13" height="14" fill="#0a0a0a"/><rect x="1" y="1" width="3" height="1" fill="#2fe62f"/><rect x="1" y="2" width="1" height="1" fill="#2fe62f"/><rect x="1" y="3" width="1" height="1" fill="#2fe62f"/><rect x="1" y="4" width="3" height="1" fill="#2fe62f"/><rect x="5" y="2" width="2" height="1" fill="#2fe62f"/><rect x="9" y="1" width="1" height="1" fill="#2fe62f"/><rect x="11" y="1" width="1" height="1" fill="#2fe62f"/><rect x="9" y="2" width="3" height="1" fill="#2fe62f"/><rect x="11" y="3" width="1" height="1" fill="#2fe62f"/><rect x="11" y="4" width="1" height="1" fill="#2fe62f"/><rect x="1" y="6.5" width="1" height="1" fill="#25b825"/><rect x="3" y="6.5" width="1" height="1" fill="#25b825"/><rect x="5" y="6.5" width="1" height="1" fill="#25b825"/><rect x="7" y="6.5" width="1" height="1" fill="#25b825"/><rect x="9" y="6.5" width="1" height="1" fill="#25b825"/><rect x="11" y="6.5" width="1" height="1" fill="#25b825"/><rect x="1" y="9" width="2" height="1" fill="#2fe62f"/><rect x="1" y="10" width="1" height="1" fill="#2fe62f"/><rect x="3" y="10" width="1" height="1" fill="#2fe62f"/><rect x="1" y="11" width="1" height="1" fill="#2fe62f"/><rect x="3" y="11" width="1" height="1" fill="#2fe62f"/><rect x="1" y="12" width="2" height="1" fill="#2fe62f"/><rect x="5" y="10" width="2" height="1" fill="#2fe62f"/><rect x="9" y="9" width="1" height="1" fill="#2fe62f"/><rect x="11" y="9" width="1" height="1" fill="#2fe62f"/><rect x="9" y="10" width="3" height="1" fill="#2fe62f"/><rect x="11" y="11" width="1" height="1" fill="#2fe62f"/><rect x="11" y="12" width="1" height="1" fill="#2fe62f"/></svg>
<svg class="a" style="left:411px;top:267px" width="14" height="15" viewBox="0 0 14 15"><path d="M1.5 0V13M1.5 5.5H6M1.5 11.5H6" stroke="#333" stroke-dasharray="1 1" fill="none"/><rect x="6.5" y="2.5" width="6" height="5" fill="#f0e020" stroke="#504800"/><rect x="6.5" y="9.5" width="6" height="5" fill="#f0e020" stroke="#504800"/></svg>
<svg class="a" style="left:440px;top:266px" width="13" height="17" viewBox="0 0 13 17"><circle cx="6.5" cy="3" r="2.4" fill="#e0e0e0" stroke="#b8b8b8"/><path d="M1 15V8.5C1 6.5 3 6 6.5 6S12 6.500 12 8.5V15H9.500V16H3.500V15Z" fill="#e0e0e0" stroke="#b8b8b8"/></svg>
<div class="a" style="left:480px;top:264px;width:26px;height:21px;background:#cce4f7;border:1px solid #b6d9f3"></div>
<svg class="a" style="left:487px;top:269px" width="14" height="11" viewBox="0 0 14 11"><rect width="14" height="11" fill="#dcdcdc"/><rect x="0" y="0" width="14" height="1" fill="#f4f4f4"/><rect x="0" y="10" width="14" height="1" fill="#c4c4c4"/><rect x="3.300" y="1" width="2.600" height="9" fill="#fbfbfb"/><rect x="7.800" y="1" width="2.600" height="9" fill="#fbfbfb"/><path d="M2.600 4.600 L5.500 3.300 L5.800 5.300 Z" fill="#222"/><circle cx="5" cy="4.500" r="1" fill="#111"/><path d="M7 4.700 L9 3.500 V5.500Z" fill="#333"/><circle cx="9.300" cy="4.400" r="1.550" fill="#0c0c0c"/></svg>
<svg class="a" style="left:512px;top:269.5px" width="15" height="11" viewBox="0 0 15 11"><path d="M0.600 0.800 L2.500 2.600 L3.600 1.600 L7 4 L9 3.800 L13.800 5.500 L9 7.200 L7 7 L3.600 9.400 L2.500 8.400 L0.600 10.200Z" fill="#22dc22" stroke="#14a814" stroke-width="0.700"/></svg>
<svg class="a" style="left:536px;top:269.500px" width="18" height="11" viewBox="0 0 18 11"><path d="M1 5.500 L5 1 H13 L17 5.500 L13 10 H5Z" fill="#e01414" stroke="#111" stroke-width="1.400"/><path d="M9 1.700 H12.700 L16 5.500 L12.700 9.300 H9Z" fill="#129a34"/><circle cx="10.800" cy="5.500" r="3.300" fill="#129a34"/><circle cx="8.700" cy="4.800" r="1.300" fill="#fff"/></svg>
<div class="sep" style="left:560px;top:266px;height:18px"></div>
<svg class="a" style="left:573px;top:268px" width="12" height="14" viewBox="0 0 12 14"><path d="M0.5 0.5 H7.5 L10.5 3.5 V12.5 H0.5Z" fill="#fff" stroke="#b4b4b4" stroke-width="1"/><path d="M7.5 0.5 L10.5 3.5 V12.5 H0.5" fill="none" stroke="#000" stroke-width="1"/><path d="M7.5 0.5 V3.5 H10.5" fill="none" stroke="#555" stroke-width="1"/><path d="M11.5 4 V13.5 H1.5" fill="none" stroke="#9a9a9a" stroke-width="1"/></svg>
<svg class="a" style="left:598px;top:270px" width="16" height="11" viewBox="0 0 16 11"><path d="M0.5 10.5 V1.5 L1.5 0.5 H4.5 L5.5 1.5 H10.5 V4.5" fill="#b4b024" stroke="#5a5a00" stroke-width="1"/><path d="M0.5 10.5 L3.5 4.5 H15.5 L12.5 10.5Z" fill="#ece648" stroke="#5a5a00" stroke-width="1"/></svg>
<div class="a" style="left:622px;top:273px;width:0;height:0;border-left:3.5px solid transparent;border-right:3.5px solid transparent;border-top:4px solid #222"></div>
<svg class="a" style="left:638px;top:268px" width="15" height="14" viewBox="0 0 15 14"><path d="M0.5 0.5 H13.5 V13.5 H1.5 L0.5 12.5Z" fill="#1a1a1a" stroke="#000" stroke-width="1"/><rect x="3" y="1" width="8" height="6" fill="#f4f4f4"/><rect x="4" y="9" width="7" height="4" fill="#b0b0b0"/><rect x="5" y="10" width="2" height="3" fill="#1a1a1a"/></svg>
<svg class="a" style="left:663px;top:267px" width="17" height="15" viewBox="0 0 17 15"><rect x="0.5" y="3.500" width="11" height="11" fill="#fff" stroke="#111"/><path d="M2.5 6.5H9.500M2.5 8.5H9.500M2.5 10.5H9.500M2.5 12.5H7" stroke="#333"/><path d="M4 3V1.500H8V3" stroke="#111" fill="#bbb"/><path d="M10 4 L14.5 1.5 M12 0.8H15.500V4.200" stroke="#101060" stroke-width="1.4" fill="none"/></svg>
<svg class="a" style="left:691px;top:267px" width="16" height="14" viewBox="0 0 16 14"><path d="M1 1.5 C5 4 9 8 13 12.500 M13 0.800 C9 4 5 8 1.500 12.500" stroke="#000080" stroke-width="2" fill="none" stroke-linecap="round"/></svg>
<svg class="a" style="left:8px;top:296px" width="7" height="7" viewBox="0 0 7 7"><path d="M3.5 0.3 L6.6 3.6 H0.4Z" fill="#222"/><rect x="0.500" y="4.800" width="6" height="1.400" fill="#222"/></svg>
<div class="t"  style="left:27.16px;top:295.60px;font-size:10.8px;letter-spacing:0.022px;color:#000;font-weight:normal;font-kerning:none;">Track 00</div>
<div class="t"  style="left:171.16px;top:295.60px;font-size:10.8px;letter-spacing:0.037px;color:#000;font-weight:normal;font-kerning:none;">Track 01</div>
<div class="t"  style="left:315.16px;top:295.60px;font-size:10.8px;letter-spacing:0.039px;color:#000;font-weight:normal;font-kerning:none;">Track 02</div>
<div class="t"  style="left:459.16px;top:295.60px;font-size:10.8px;letter-spacing:0.029px;color:#000;font-weight:normal;font-kerning:none;">Track 03</div>
<div class="t"  style="left:603.16px;top:295.60px;font-size:10.8px;letter-spacing:0.007px;color:#000;font-weight:normal;font-kerning:none;">Track 04</div>
<div class="a" style="left:3px;top:312px;width:780px;height:87px;background:#2f2f33;border-top:1px solid #a8a8a8;border-left:1px solid #a8a8a8;border-right:1px solid #fff;border-bottom:1px solid #fff"><div class="a" style="left:0;top:0;right:0;bottom:0;border-top:1px solid #696969;border-left:1px solid #696969"></div></div>
<div class="a" style="left:3px;top:418px;width:780px;height:99px;background:#2f2f33;border-top:1px solid #a8a8a8;border-left:1px solid #a8a8a8;border-right:1px solid #fff;border-bottom:1px solid #fff"><div class="a" style="left:0;top:0;right:0;bottom:0;border-top:1px solid #696969;border-left:1px solid #696969"></div></div>
<div class="a" style="left:25px;top:314px;width:3px;height:84px;background:linear-gradient(90deg,#d0d0d0,#fff 50%,#9a9a9a)"></div>
<div class="a" style="left:169px;top:314px;width:3px;height:84px;background:linear-gradient(90deg,#d0d0d0,#fff 50%,#9a9a9a)"></div>
<div class="a" style="left:313px;top:314px;width:3px;height:84px;background:linear-gradient(90deg,#d0d0d0,#fff 50%,#9a9a9a)"></div>
<div class="a" style="left:457px;top:314px;width:3px;height:84px;background:linear-gradient(90deg,#d0d0d0,#fff 50%,#9a9a9a)"></div>
<div class="a" style="left:601px;top:314px;width:3px;height:84px;background:linear-gradient(90deg,#d0d0d0,#fff 50%,#9a9a9a)"></div>
<div class="a" style="left:25px;top:420px;width:3px;height:96px;background:linear-gradient(90deg,#d0d0d0,#fff 50%,#9a9a9a)"></div>
<div class="a" style="left:169px;top:420px;width:3px;height:96px;background:linear-gradient(90deg,#d0d0d0,#fff 50%,#9a9a9a)"></div>
<div class="a" style="left:313px;top:420px;width:3px;height:96px;background:linear-gradient(90deg,#d0d0d0,#fff 50%,#9a9a9a)"></div>
<div class="a" style="left:457px;top:420px;width:3px;height:96px;background:linear-gradient(90deg,#d0d0d0,#fff 50%,#9a9a9a)"></div>
<div class="a" style="left:601px;top:420px;width:3px;height:96px;background:linear-gradient(90deg,#d0d0d0,#fff 50%,#9a9a9a)"></div>
<span class="px" style="left:8px;top:314px;color:#cacaca;-webkit-text-stroke:0.2px #cacaca;"><i>4</i><i>3</i></span>
<div class="dots" style="left:30px;top:318px;width:24px"></div>
<div class="dots" style="left:78px;top:318px;width:16px"></div>
<div class="dots" style="left:98px;top:318px;width:16px"></div>
<div class="dots" style="left:118px;top:318px;width:16px"></div>
<div class="dots" style="left:136px;top:318px;width:32px"></div>
<div class="dots" style="left:174px;top:318px;width:24px"></div>
<div class="dots" style="left:222px;top:318px;width:16px"></div>
<div class="dots" style="left:242px;top:318px;width:16px"></div>
<div class="dots" style="left:262px;top:318px;width:16px"></div>
<div class="dots" style="left:280px;top:318px;width:32px"></div>
<div class="dots" style="left:318px;top:318px;width:24px"></div>
<div class="dots" style="left:366px;top:318px;width:16px"></div>
<div class="dots" style="left:386px;top:318px;width:16px"></div>
<div class="dots" style="left:406px;top:318px;width:16px"></div>
<div class="dots" style="left:424px;top:318px;width:32px"></div>
<div class="dots" style="left:462px;top:318px;width:24px"></div>
<div class="dots" style="left:510px;top:318px;width:16px"></div>
<div class="dots" style="left:531px;top:318px;width:16px"></div>
<div class="dots" style="left:551px;top:318px;width:16px"></div>
<div class="dots" style="left:569px;top:318px;width:32px"></div>
<div class="dots" style="left:607px;top:318px;width:24px"></div>
<div class="dots" style="left:655px;top:318px;width:16px"></div>
<div class="dots" style="left:675px;top:318px;width:16px"></div>
<div class="dots" style="left:695px;top:318px;width:16px"></div>
<div class="dots" style="left:713px;top:318px;width:32px"></div>
<span class="px" style="left:8px;top:326px;color:#cacaca;-webkit-text-stroke:0.2px #cacaca;"><i>4</i><i>4</i></span>
<div class="dots" style="left:30px;top:330px;width:24px"></div>
<div class="dots" style="left:78px;top:330px;width:16px"></div>
<div class="dots" style="left:98px;top:330px;width:16px"></div>
<div class="dots" style="left:118px;top:330px;width:16px"></div>
<div class="dots" style="left:136px;top:330px;width:32px"></div>
<span class="px" style="left:174px;top:326px;color:#cacaca;-webkit-text-stroke:0.2px #cacaca;"><i>C</i><i class="h">-</i><i>4</i></span>
<span class="px" style="left:210px;top:326px;color:#cacaca;-webkit-text-stroke:0.2px #cacaca;"><i>4</i></span>
<span class="px" style="left:222px;top:326px;color:#cacaca;-webkit-text-stroke:0.2px #cacaca;"><i>5</i><i>4</i></span>
<div class="dots" style="left:242px;top:330px;width:16px"></div>
<div class="dots" style="left:262px;top:330px;width:16px"></div>
<div class="dots" style="left:280px;top:330px;width:32px"></div>
<div class="dots" style="left:318px;top:330px;width:24px"></div>
<div class="dots" style="left:366px;top:330px;width:16px"></div>
<div class="dots" style="left:386px;top:330px;width:16px"></div>
<div class="dots" style="left:406px;top:330px;width:16px"></div>
<div class="dots" style="left:424px;top:330px;width:32px"></div>
<div class="dots" style="left:462px;top:330px;width:24px"></div>
<div class="dots" style="left:510px;top:330px;width:16px"></div>
<div class="dots" style="left:531px;top:330px;width:16px"></div>
<div class="dots" style="left:551px;top:330px;width:16px"></div>
<div class="dots" style="left:569px;top:330px;width:32px"></div>
<div class="dots" style="left:607px;top:330px;width:24px"></div>
<div class="dots" style="left:655px;top:330px;width:16px"></div>
<div class="dots" style="left:675px;top:330px;width:16px"></div>
<div class="dots" style="left:695px;top:330px;width:16px"></div>
<div class="dots" style="left:713px;top:330px;width:32px"></div>
<span class="px" style="left:8px;top:338px;color:#cacaca;-webkit-text-stroke:0.2px #cacaca;"><i>4</i><i>5</i></span>
<div class="dots" style="left:30px;top:342px;width:24px"></div>
<div class="dots" style="left:78px;top:342px;width:16px"></div>
<div class="dots" style="left:98px;top:342px;width:16px"></div>
<div class="dots" style="left:118px;top:342px;width:16px"></div>
<div class="dots" style="left:136px;top:342px;width:32px"></div>
<div class="dots" style="left:174px;top:342px;width:24px"></div>
<div class="dots" style="left:222px;top:342px;width:16px"></div>
<div class="dots" style="left:242px;top:342px;width:16px"></div>
<div class="dots" style="left:262px;top:342px;width:16px"></div>
<div class="dots" style="left:280px;top:342px;width:32px"></div>
<div class="dots" style="left:318px;top:342px;width:24px"></div>
<div class="dots" style="left:366px;top:342px;width:16px"></div>
<div class="dots" style="left:386px;top:342px;width:16px"></div>
<div class="dots" style="left:406px;top:342px;width:16px"></div>
<div class="dots" style="left:424px;top:342px;width:32px"></div>
<div class="dots" style="left:462px;top:342px;width:24px"></div>
<div class="dots" style="left:510px;top:342px;width:16px"></div>
<div class="dots" style="left:531px;top:342px;width:16px"></div>
<div class="dots" style="left:551px;top:342px;width:16px"></div>
<div class="dots" style="left:569px;top:342px;width:32px"></div>
<div class="dots" style="left:607px;top:342px;width:24px"></div>
<div class="dots" style="left:655px;top:342px;width:16px"></div>
<div class="dots" style="left:675px;top:342px;width:16px"></div>
<div class="dots" style="left:695px;top:342px;width:16px"></div>
<div class="dots" style="left:713px;top:342px;width:32px"></div>
<span class="px" style="left:8px;top:350px;color:#cacaca;-webkit-text-stroke:0.2px #cacaca;"><i>4</i><i>6</i></span>
<div class="dots" style="left:30px;top:354px;width:24px"></div>
<div class="dots" style="left:78px;top:354px;width:16px"></div>
<div class="dots" style="left:98px;top:354px;width:16px"></div>
<div class="dots" style="left:118px;top:354px;width:16px"></div>
<div class="dots" style="left:136px;top:354px;width:32px"></div>
<span class="px" style="left:174px;top:350px;color:#cacaca;-webkit-text-stroke:0.2px #cacaca;"><i>C</i><i class="h">-</i><i>4</i></span>
<span class="px" style="left:210px;top:350px;color:#cacaca;-webkit-text-stroke:0.2px #cacaca;"><i>4</i></span>
<span class="px" style="left:222px;top:350px;color:#cacaca;-webkit-text-stroke:0.2px #cacaca;"><i>5</i><i>4</i></span>
<div class="dots" style="left:242px;top:354px;width:16px"></div>
<div class="dots" style="left:262px;top:354px;width:16px"></div>
<div class="dots" style="left:280px;top:354px;width:32px"></div>
<div class="dots" style="left:318px;top:354px;width:24px"></div>
<div class="dots" style="left:366px;top:354px;width:16px"></div>
<div class="dots" style="left:386px;top:354px;width:16px"></div>
<div class="dots" style="left:406px;top:354px;width:16px"></div>
<div class="dots" style="left:424px;top:354px;width:32px"></div>
<div class="dots" style="left:462px;top:354px;width:24px"></div>
<div class="dots" style="left:510px;top:354px;width:16px"></div>
<div class="dots" style="left:531px;top:354px;width:16px"></div>
<div class="dots" style="left:551px;top:354px;width:16px"></div>
<div class="dots" style="left:569px;top:354px;width:32px"></div>
<div class="dots" style="left:607px;top:354px;width:24px"></div>
<div class="dots" style="left:655px;top:354px;width:16px"></div>
<div class="dots" style="left:675px;top:354px;width:16px"></div>
<div class="dots" style="left:695px;top:354px;width:16px"></div>
<div class="dots" style="left:713px;top:354px;width:32px"></div>
<span class="px" style="left:8px;top:362px;color:#cacaca;-webkit-text-stroke:0.2px #cacaca;"><i>4</i><i>7</i></span>
<div class="dots" style="left:30px;top:366px;width:24px"></div>
<div class="dots" style="left:78px;top:366px;width:16px"></div>
<div class="dots" style="left:98px;top:366px;width:16px"></div>
<div class="dots" style="left:118px;top:366px;width:16px"></div>
<div class="dots" style="left:136px;top:366px;width:32px"></div>
<div class="dots" style="left:174px;top:366px;width:24px"></div>
<div class="dots" style="left:222px;top:366px;width:16px"></div>
<div class="dots" style="left:242px;top:366px;width:16px"></div>
<div class="dots" style="left:262px;top:366px;width:16px"></div>
<div class="dots" style="left:280px;top:366px;width:32px"></div>
<div class="dots" style="left:318px;top:366px;width:24px"></div>
<div class="dots" style="left:366px;top:366px;width:16px"></div>
<div class="dots" style="left:386px;top:366px;width:16px"></div>
<div class="dots" style="left:406px;top:366px;width:16px"></div>
<div class="dots" style="left:424px;top:366px;width:32px"></div>
<div class="dots" style="left:462px;top:366px;width:24px"></div>
<div class="dots" style="left:510px;top:366px;width:16px"></div>
<div class="dots" style="left:531px;top:366px;width:16px"></div>
<div class="dots" style="left:551px;top:366px;width:16px"></div>
<div class="dots" style="left:569px;top:366px;width:32px"></div>
<div class="dots" style="left:607px;top:366px;width:24px"></div>
<div class="dots" style="left:655px;top:366px;width:16px"></div>
<div class="dots" style="left:675px;top:366px;width:16px"></div>
<div class="dots" style="left:695px;top:366px;width:16px"></div>
<div class="dots" style="left:713px;top:366px;width:32px"></div>
<span class="px" style="left:8px;top:374px;color:#ececff;-webkit-text-stroke:0.2px #ececff;"><i>4</i><i>8</i></span>
<span class="px" style="left:30px;top:374px;color:#ececff;-webkit-text-stroke:0.2px #ececff;"><i>C</i><i class="h">-</i><i>4</i></span>
<span class="px" style="left:66px;top:374px;color:#ececff;-webkit-text-stroke:0.2px #ececff;"><i>3</i></span>
<span class="px" style="left:78px;top:374px;color:#ececff;-webkit-text-stroke:0.2px #ececff;"><i>6</i><i>8</i></span>
<div class="dots" style="left:98px;top:378px;width:16px"></div>
<div class="dots" style="left:118px;top:378px;width:16px"></div>
<div class="dots" style="left:136px;top:378px;width:32px"></div>
<div class="dots" style="left:174px;top:378px;width:24px"></div>
<div class="dots" style="left:222px;top:378px;width:16px"></div>
<div class="dots" style="left:242px;top:378px;width:16px"></div>
<div class="dots" style="left:262px;top:378px;width:16px"></div>
<div class="dots" style="left:280px;top:378px;width:32px"></div>
<div class="dots" style="left:318px;top:378px;width:24px"></div>
<div class="dots" style="left:366px;top:378px;width:16px"></div>
<div class="dots" style="left:386px;top:378px;width:16px"></div>
<div class="dots" style="left:406px;top:378px;width:16px"></div>
<div class="dots" style="left:424px;top:378px;width:32px"></div>
<div class="dots" style="left:462px;top:378px;width:24px"></div>
<div class="dots" style="left:510px;top:378px;width:16px"></div>
<div class="dots" style="left:531px;top:378px;width:16px"></div>
<div class="dots" style="left:551px;top:378px;width:16px"></div>
<div class="dots" style="left:569px;top:378px;width:32px"></div>
<div class="dots" style="left:607px;top:378px;width:24px"></div>
<div class="dots" style="left:655px;top:378px;width:16px"></div>
<div class="dots" style="left:675px;top:378px;width:16px"></div>
<div class="dots" style="left:695px;top:378px;width:16px"></div>
<div class="dots" style="left:713px;top:378px;width:32px"></div>
<span class="px" style="left:8px;top:386px;color:#cacaca;-webkit-text-stroke:0.2px #cacaca;"><i>4</i><i>9</i></span>
<div class="dots" style="left:30px;top:390px;width:24px"></div>
<div class="dots" style="left:78px;top:390px;width:16px"></div>
<div class="dots" style="left:98px;top:390px;width:16px"></div>
<div class="dots" style="left:118px;top:390px;width:16px"></div>
<div class="dots" style="left:136px;top:390px;width:32px"></div>
<div class="dots" style="left:174px;top:390px;width:24px"></div>
<div class="dots" style="left:222px;top:390px;width:16px"></div>
<div class="dots" style="left:242px;top:390px;width:16px"></div>
<div class="dots" style="left:262px;top:390px;width:16px"></div>
<div class="dots" style="left:280px;top:390px;width:32px"></div>
<div class="dots" style="left:318px;top:390px;width:24px"></div>
<div class="dots" style="left:366px;top:390px;width:16px"></div>
<div class="dots" style="left:386px;top:390px;width:16px"></div>
<div class="dots" style="left:406px;top:390px;width:16px"></div>
<div class="dots" style="left:424px;top:390px;width:32px"></div>
<div class="dots" style="left:462px;top:390px;width:24px"></div>
<div class="dots" style="left:510px;top:390px;width:16px"></div>
<div class="dots" style="left:531px;top:390px;width:16px"></div>
<div class="dots" style="left:551px;top:390px;width:16px"></div>
<div class="dots" style="left:569px;top:390px;width:32px"></div>
<div class="dots" style="left:607px;top:390px;width:24px"></div>
<div class="dots" style="left:655px;top:390px;width:16px"></div>
<div class="dots" style="left:675px;top:390px;width:16px"></div>
<div class="dots" style="left:695px;top:390px;width:16px"></div>
<div class="dots" style="left:713px;top:390px;width:32px"></div>
<span class="px" style="left:8px;top:403px;color:#000;-webkit-text-stroke:0.55px #000;"><i>5</i><i>0</i></span>
<div class="ldots" style="left:30px;top:407px;width:24px"></div>
<div class="ldots" style="left:78px;top:407px;width:16px"></div>
<div class="ldots" style="left:98px;top:407px;width:16px"></div>
<div class="ldots" style="left:118px;top:407px;width:16px"></div>
<div class="ldots" style="left:136px;top:407px;width:32px"></div>
<span class="px" style="left:174px;top:403px;color:#000;-webkit-text-stroke:0.45px #000;"><i>C</i><i class="h">-</i><i>4</i></span>
<span class="px" style="left:210px;top:403px;color:#000;-webkit-text-stroke:0.45px #000;"><i>4</i></span>
<span class="px" style="left:222px;top:403px;color:#000;-webkit-text-stroke:0.45px #000;"><i>5</i><i>4</i></span>
<div class="ldots" style="left:242px;top:407px;width:16px"></div>
<div class="ldots" style="left:262px;top:407px;width:16px"></div>
<div class="ldots" style="left:280px;top:407px;width:32px"></div>
<div class="ldots" style="left:318px;top:407px;width:24px"></div>
<div class="ldots" style="left:366px;top:407px;width:16px"></div>
<div class="ldots" style="left:386px;top:407px;width:16px"></div>
<div class="ldots" style="left:406px;top:407px;width:16px"></div>
<div class="ldots" style="left:424px;top:407px;width:32px"></div>
<div class="ldots" style="left:462px;top:407px;width:24px"></div>
<div class="ldots" style="left:510px;top:407px;width:16px"></div>
<div class="ldots" style="left:531px;top:407px;width:16px"></div>
<div class="ldots" style="left:551px;top:407px;width:16px"></div>
<div class="ldots" style="left:569px;top:407px;width:32px"></div>
<div class="ldots" style="left:607px;top:407px;width:24px"></div>
<div class="ldots" style="left:655px;top:407px;width:16px"></div>
<div class="ldots" style="left:675px;top:407px;width:16px"></div>
<div class="ldots" style="left:695px;top:407px;width:16px"></div>
<div class="ldots" style="left:713px;top:407px;width:32px"></div>
<span class="px" style="left:8px;top:420px;color:#cacaca;-webkit-text-stroke:0.2px #cacaca;"><i>5</i><i>1</i></span>
<div class="dots" style="left:30px;top:424px;width:24px"></div>
<div class="dots" style="left:78px;top:424px;width:16px"></div>
<div class="dots" style="left:98px;top:424px;width:16px"></div>
<div class="dots" style="left:118px;top:424px;width:16px"></div>
<div class="dots" style="left:136px;top:424px;width:32px"></div>
<div class="dots" style="left:174px;top:424px;width:24px"></div>
<div class="dots" style="left:222px;top:424px;width:16px"></div>
<div class="dots" style="left:242px;top:424px;width:16px"></div>
<div class="dots" style="left:262px;top:424px;width:16px"></div>
<div class="dots" style="left:280px;top:424px;width:32px"></div>
<div class="dots" style="left:318px;top:424px;width:24px"></div>
<div class="dots" style="left:366px;top:424px;width:16px"></div>
<div class="dots" style="left:386px;top:424px;width:16px"></div>
<div class="dots" style="left:406px;top:424px;width:16px"></div>
<div class="dots" style="left:424px;top:424px;width:32px"></div>
<div class="dots" style="left:462px;top:424px;width:24px"></div>
<div class="dots" style="left:510px;top:424px;width:16px"></div>
<div class="dots" style="left:531px;top:424px;width:16px"></div>
<div class="dots" style="left:551px;top:424px;width:16px"></div>
<div class="dots" style="left:569px;top:424px;width:32px"></div>
<div class="dots" style="left:607px;top:424px;width:24px"></div>
<div class="dots" style="left:655px;top:424px;width:16px"></div>
<div class="dots" style="left:675px;top:424px;width:16px"></div>
<div class="dots" style="left:695px;top:424px;width:16px"></div>
<div class="dots" style="left:713px;top:424px;width:32px"></div>
<span class="px" style="left:8px;top:432px;color:#cacaca;-webkit-text-stroke:0.2px #cacaca;"><i>5</i><i>2</i></span>
<div class="dots" style="left:30px;top:436px;width:24px"></div>
<div class="dots" style="left:78px;top:436px;width:16px"></div>
<div class="dots" style="left:98px;top:436px;width:16px"></div>
<div class="dots" style="left:118px;top:436px;width:16px"></div>
<div class="dots" style="left:136px;top:436px;width:32px"></div>
<span class="px" style="left:174px;top:432px;color:#cacaca;-webkit-text-stroke:0.2px #cacaca;"><i>C</i><i class="h">-</i><i>4</i></span>
<span class="px" style="left:210px;top:432px;color:#cacaca;-webkit-text-stroke:0.2px #cacaca;"><i>4</i></span>
<span class="px" style="left:222px;top:432px;color:#cacaca;-webkit-text-stroke:0.2px #cacaca;"><i>5</i><i>4</i></span>
<div class="dots" style="left:242px;top:436px;width:16px"></div>
<div class="dots" style="left:262px;top:436px;width:16px"></div>
<div class="dots" style="left:280px;top:436px;width:32px"></div>
<div class="dots" style="left:318px;top:436px;width:24px"></div>
<div class="dots" style="left:366px;top:436px;width:16px"></div>
<div class="dots" style="left:386px;top:436px;width:16px"></div>
<div class="dots" style="left:406px;top:436px;width:16px"></div>
<div class="dots" style="left:424px;top:436px;width:32px"></div>
<div class="dots" style="left:462px;top:436px;width:24px"></div>
<div class="dots" style="left:510px;top:436px;width:16px"></div>
<div class="dots" style="left:531px;top:436px;width:16px"></div>
<div class="dots" style="left:551px;top:436px;width:16px"></div>
<div class="dots" style="left:569px;top:436px;width:32px"></div>
<div class="dots" style="left:607px;top:436px;width:24px"></div>
<div class="dots" style="left:655px;top:436px;width:16px"></div>
<div class="dots" style="left:675px;top:436px;width:16px"></div>
<div class="dots" style="left:695px;top:436px;width:16px"></div>
<div class="dots" style="left:713px;top:436px;width:32px"></div>
<span class="px" style="left:8px;top:444px;color:#cacaca;-webkit-text-stroke:0.2px #cacaca;"><i>5</i><i>3</i></span>
<div class="dots" style="left:30px;top:448px;width:24px"></div>
<div class="dots" style="left:78px;top:448px;width:16px"></div>
<div class="dots" style="left:98px;top:448px;width:16px"></div>
<div class="dots" style="left:118px;top:448px;width:16px"></div>
<div class="dots" style="left:136px;top:448px;width:32px"></div>
<div class="dots" style="left:174px;top:448px;width:24px"></div>
<div class="dots" style="left:222px;top:448px;width:16px"></div>
<div class="dots" style="left:242px;top:448px;width:16px"></div>
<div class="dots" style="left:262px;top:448px;width:16px"></div>
<div class="dots" style="left:280px;top:448px;width:32px"></div>
<div class="dots" style="left:318px;top:448px;width:24px"></div>
<div class="dots" style="left:366px;top:448px;width:16px"></div>
<div class="dots" style="left:386px;top:448px;width:16px"></div>
<div class="dots" style="left:406px;top:448px;width:16px"></div>
<div class="dots" style="left:424px;top:448px;width:32px"></div>
<div class="dots" style="left:462px;top:448px;width:24px"></div>
<div class="dots" style="left:510px;top:448px;width:16px"></div>
<div class="dots" style="left:531px;top:448px;width:16px"></div>
<div class="dots" style="left:551px;top:448px;width:16px"></div>
<div class="dots" style="left:569px;top:448px;width:32px"></div>
<div class="dots" style="left:607px;top:448px;width:24px"></div>
<div class="dots" style="left:655px;top:448px;width:16px"></div>
<div class="dots" style="left:675px;top:448px;width:16px"></div>
<div class="dots" style="left:695px;top:448px;width:16px"></div>
<div class="dots" style="left:713px;top:448px;width:32px"></div>
<span class="px" style="left:8px;top:456px;color:#cacaca;-webkit-text-stroke:0.2px #cacaca;"><i>5</i><i>4</i></span>
<div class="dots" style="left:30px;top:460px;width:24px"></div>
<div class="dots" style="left:78px;top:460px;width:16px"></div>
<div class="dots" style="left:98px;top:460px;width:16px"></div>
<div class="dots" style="left:118px;top:460px;width:16px"></div>
<div class="dots" style="left:136px;top:460px;width:32px"></div>
<span class="px" style="left:174px;top:456px;color:#cacaca;-webkit-text-stroke:0.2px #cacaca;"><i>C</i><i class="h">-</i><i>4</i></span>
<span class="px" style="left:210px;top:456px;color:#cacaca;-webkit-text-stroke:0.2px #cacaca;"><i>4</i></span>
<span class="px" style="left:222px;top:456px;color:#cacaca;-webkit-text-stroke:0.2px #cacaca;"><i>5</i><i>4</i></span>
<div class="dots" style="left:242px;top:460px;width:16px"></div>
<div class="dots" style="left:262px;top:460px;width:16px"></div>
<div class="dots" style="left:280px;top:460px;width:32px"></div>
<div class="dots" style="left:318px;top:460px;width:24px"></div>
<div class="dots" style="left:366px;top:460px;width:16px"></div>
<div class="dots" style="left:386px;top:460px;width:16px"></div>
<div class="dots" style="left:406px;top:460px;width:16px"></div>
<div class="dots" style="left:424px;top:460px;width:32px"></div>
<div class="dots" style="left:462px;top:460px;width:24px"></div>
<div class="dots" style="left:510px;top:460px;width:16px"></div>
<div class="dots" style="left:531px;top:460px;width:16px"></div>
<div class="dots" style="left:551px;top:460px;width:16px"></div>
<div class="dots" style="left:569px;top:460px;width:32px"></div>
<div class="dots" style="left:607px;top:460px;width:24px"></div>
<div class="dots" style="left:655px;top:460px;width:16px"></div>
<div class="dots" style="left:675px;top:460px;width:16px"></div>
<div class="dots" style="left:695px;top:460px;width:16px"></div>
<div class="dots" style="left:713px;top:460px;width:32px"></div>
<span class="px" style="left:8px;top:468px;color:#cacaca;-webkit-text-stroke:0.2px #cacaca;"><i>5</i><i>5</i></span>
<div class="dots" style="left:30px;top:472px;width:24px"></div>
<div class="dots" style="left:78px;top:472px;width:16px"></div>
<div class="dots" style="left:98px;top:472px;width:16px"></div>
<div class="dots" style="left:118px;top:472px;width:16px"></div>
<div class="dots" style="left:136px;top:472px;width:32px"></div>
<div class="dots" style="left:174px;top:472px;width:24px"></div>
<div class="dots" style="left:222px;top:472px;width:16px"></div>
<div class="dots" style="left:242px;top:472px;width:16px"></div>
<div class="dots" style="left:262px;top:472px;width:16px"></div>
<div class="dots" style="left:280px;top:472px;width:32px"></div>
<div class="dots" style="left:318px;top:472px;width:24px"></div>
<div class="dots" style="left:366px;top:472px;width:16px"></div>
<div class="dots" style="left:386px;top:472px;width:16px"></div>
<div class="dots" style="left:406px;top:472px;width:16px"></div>
<div class="dots" style="left:424px;top:472px;width:32px"></div>
<div class="dots" style="left:462px;top:472px;width:24px"></div>
<div class="dots" style="left:510px;top:472px;width:16px"></div>
<div class="dots" style="left:531px;top:472px;width:16px"></div>
<div class="dots" style="left:551px;top:472px;width:16px"></div>
<div class="dots" style="left:569px;top:472px;width:32px"></div>
<div class="dots" style="left:607px;top:472px;width:24px"></div>
<div class="dots" style="left:655px;top:472px;width:16px"></div>
<div class="dots" style="left:675px;top:472px;width:16px"></div>
<div class="dots" style="left:695px;top:472px;width:16px"></div>
<div class="dots" style="left:713px;top:472px;width:32px"></div>
<span class="px" style="left:8px;top:480px;color:#ececff;-webkit-text-stroke:0.2px #ececff;"><i>5</i><i>6</i></span>
<span class="px" style="left:30px;top:480px;color:#ececff;-webkit-text-stroke:0.2px #ececff;"><i>C</i><i class="h">-</i><i>4</i></span>
<span class="px" style="left:66px;top:480px;color:#ececff;-webkit-text-stroke:0.2px #ececff;"><i>3</i></span>
<span class="px" style="left:78px;top:480px;color:#ececff;-webkit-text-stroke:0.2px #ececff;"><i>6</i><i>8</i></span>
<div class="dots" style="left:98px;top:484px;width:16px"></div>
<div class="dots" style="left:118px;top:484px;width:16px"></div>
<div class="dots" style="left:136px;top:484px;width:32px"></div>
<div class="dots" style="left:174px;top:484px;width:24px"></div>
<div class="dots" style="left:222px;top:484px;width:16px"></div>
<div class="dots" style="left:242px;top:484px;width:16px"></div>
<div class="dots" style="left:262px;top:484px;width:16px"></div>
<div class="dots" style="left:280px;top:484px;width:32px"></div>
<span class="px" style="left:318px;top:480px;color:#ececff;-webkit-text-stroke:0.2px #ececff;"><i>C</i><i class="h">-</i><i>4</i></span>
<span class="px" style="left:354px;top:480px;color:#ececff;-webkit-text-stroke:0.2px #ececff;"><i>5</i></span>
<span class="px" style="left:366px;top:480px;color:#ececff;-webkit-text-stroke:0.2px #ececff;"><i>6</i><i>1</i></span>
<div class="dots" style="left:386px;top:484px;width:16px"></div>
<div class="dots" style="left:406px;top:484px;width:16px"></div>
<div class="dots" style="left:424px;top:484px;width:32px"></div>
<div class="dots" style="left:462px;top:484px;width:24px"></div>
<div class="dots" style="left:510px;top:484px;width:16px"></div>
<div class="dots" style="left:531px;top:484px;width:16px"></div>
<div class="dots" style="left:551px;top:484px;width:16px"></div>
<div class="dots" style="left:569px;top:484px;width:32px"></div>
<div class="dots" style="left:607px;top:484px;width:24px"></div>
<div class="dots" style="left:655px;top:484px;width:16px"></div>
<div class="dots" style="left:675px;top:484px;width:16px"></div>
<div class="dots" style="left:695px;top:484px;width:16px"></div>
<div class="dots" style="left:713px;top:484px;width:32px"></div>
<span class="px" style="left:8px;top:492px;color:#cacaca;-webkit-text-stroke:0.2px #cacaca;"><i>5</i><i>7</i></span>
<div class="dots" style="left:30px;top:496px;width:24px"></div>
<div class="dots" style="left:78px;top:496px;width:16px"></div>
<div class="dots" style="left:98px;top:496px;width:16px"></div>
<div class="dots" style="left:118px;top:496px;width:16px"></div>
<div class="dots" style="left:136px;top:496px;width:32px"></div>
<div class="dots" style="left:174px;top:496px;width:24px"></div>
<div class="dots" style="left:222px;top:496px;width:16px"></div>
<div class="dots" style="left:242px;top:496px;width:16px"></div>
<div class="dots" style="left:262px;top:496px;width:16px"></div>
<div class="dots" style="left:280px;top:496px;width:32px"></div>
<div class="dots" style="left:318px;top:496px;width:24px"></div>
<div class="dots" style="left:366px;top:496px;width:16px"></div>
<div class="dots" style="left:386px;top:496px;width:16px"></div>
<div class="dots" style="left:406px;top:496px;width:16px"></div>
<div class="dots" style="left:424px;top:496px;width:32px"></div>
<div class="dots" style="left:462px;top:496px;width:24px"></div>
<div class="dots" style="left:510px;top:496px;width:16px"></div>
<div class="dots" style="left:531px;top:496px;width:16px"></div>
<div class="dots" style="left:551px;top:496px;width:16px"></div>
<div class="dots" style="left:569px;top:496px;width:32px"></div>
<div class="dots" style="left:607px;top:496px;width:24px"></div>
<div class="dots" style="left:655px;top:496px;width:16px"></div>
<div class="dots" style="left:675px;top:496px;width:16px"></div>
<div class="dots" style="left:695px;top:496px;width:16px"></div>
<div class="dots" style="left:713px;top:496px;width:32px"></div>
<span class="px" style="left:8px;top:504px;color:#cacaca;-webkit-text-stroke:0.2px #cacaca;"><i>5</i><i>8</i></span>
<div class="dots" style="left:30px;top:508px;width:24px"></div>
<div class="dots" style="left:78px;top:508px;width:16px"></div>
<div class="dots" style="left:98px;top:508px;width:16px"></div>
<div class="dots" style="left:118px;top:508px;width:16px"></div>
<div class="dots" style="left:136px;top:508px;width:32px"></div>
<span class="px" style="left:174px;top:504px;color:#cacaca;-webkit-text-stroke:0.2px #cacaca;"><i>C</i><i class="h">-</i><i>4</i></span>
<span class="px" style="left:210px;top:504px;color:#cacaca;-webkit-text-stroke:0.2px #cacaca;"><i>4</i></span>
<span class="px" style="left:222px;top:504px;color:#cacaca;-webkit-text-stroke:0.2px #cacaca;"><i>5</i><i>4</i></span>
<div class="dots" style="left:242px;top:508px;width:16px"></div>
<div class="dots" style="left:262px;top:508px;width:16px"></div>
<div class="dots" style="left:280px;top:508px;width:32px"></div>
<div class="dots" style="left:318px;top:508px;width:24px"></div>
<div class="dots" style="left:366px;top:508px;width:16px"></div>
<div class="dots" style="left:386px;top:508px;width:16px"></div>
<div class="dots" style="left:406px;top:508px;width:16px"></div>
<div class="dots" style="left:424px;top:508px;width:32px"></div>
<div class="dots" style="left:462px;top:508px;width:24px"></div>
<div class="dots" style="left:510px;top:508px;width:16px"></div>
<div class="dots" style="left:531px;top:508px;width:16px"></div>
<div class="dots" style="left:551px;top:508px;width:16px"></div>
<div class="dots" style="left:569px;top:508px;width:32px"></div>
<div class="dots" style="left:607px;top:508px;width:24px"></div>
<div class="dots" style="left:655px;top:508px;width:16px"></div>
<div class="dots" style="left:675px;top:508px;width:16px"></div>
<div class="dots" style="left:695px;top:508px;width:16px"></div>
<div class="dots" style="left:713px;top:508px;width:32px"></div>
<div class="a" style="left:374px;top:403px;width:8px;height:12px;background:#2f6492"></div>
<svg class="a" style="left:8px;top:531px" width="13" height="14" viewBox="0 0 13 14" shape-rendering="crispEdges"><rect width="13" height="14" fill="#0a0a0a"/><rect x="1" y="1" width="3" height="1" fill="#2fe62f"/><rect x="1" y="2" width="1" height="1" fill="#2fe62f"/><rect x="1" y="3" width="1" height="1" fill="#2fe62f"/><rect x="1" y="4" width="3" height="1" fill="#2fe62f"/><rect x="5" y="2" width="2" height="1" fill="#2fe62f"/><rect x="9" y="1" width="1" height="1" fill="#2fe62f"/><rect x="11" y="1" width="1" height="1" fill="#2fe62f"/><rect x="9" y="2" width="3" height="1" fill="#2fe62f"/><rect x="11" y="3" width="1" height="1" fill="#2fe62f"/><rect x="11" y="4" width="1" height="1" fill="#2fe62f"/><rect x="1" y="6.5" width="1" height="1" fill="#25b825"/><rect x="3" y="6.5" width="1" height="1" fill="#25b825"/><rect x="5" y="6.5" width="1" height="1" fill="#25b825"/><rect x="7" y="6.5" width="1" height="1" fill="#25b825"/><rect x="9" y="6.5" width="1" height="1" fill="#25b825"/><rect x="11" y="6.5" width="1" height="1" fill="#25b825"/><rect x="1" y="9" width="2" height="1" fill="#2fe62f"/><rect x="1" y="10" width="1" height="1" fill="#2fe62f"/><rect x="3" y="10" width="1" height="1" fill="#2fe62f"/><rect x="1" y="11" width="1" height="1" fill="#2fe62f"/><rect x="3" y="11" width="1" height="1" fill="#2fe62f"/><rect x="1" y="12" width="2" height="1" fill="#2fe62f"/><rect x="5" y="10" width="2" height="1" fill="#2fe62f"/><rect x="9" y="9" width="1" height="1" fill="#2fe62f"/><rect x="11" y="9" width="1" height="1" fill="#2fe62f"/><rect x="9" y="10" width="3" height="1" fill="#2fe62f"/><rect x="11" y="11" width="1" height="1" fill="#2fe62f"/><rect x="11" y="12" width="1" height="1" fill="#2fe62f"/></svg>
<div class="a" style="left:26px;top:527px;width:23px;height:21px;background:#cce4f7;border:1px solid #b6d9f3"></div>
<svg class="a" style="left:31px;top:531px" width="13" height="14" viewBox="0 0 13 14" shape-rendering="crispEdges"><rect width="13" height="14" fill="#0a0a0a"/><rect x="1" y="1" width="3" height="1" fill="#2fe62f"/><rect x="1" y="2" width="1" height="1" fill="#2fe62f"/><rect x="1" y="3" width="1" height="1" fill="#2fe62f"/><rect x="1" y="4" width="3" height="1" fill="#2fe62f"/><rect x="5" y="2" width="2" height="1" fill="#2fe62f"/><rect x="9" y="1" width="1" height="1" fill="#2fe62f"/><rect x="11" y="1" width="1" height="1" fill="#2fe62f"/><rect x="9" y="2" width="3" height="1" fill="#2fe62f"/><rect x="11" y="3" width="1" height="1" fill="#2fe62f"/><rect x="11" y="4" width="1" height="1" fill="#2fe62f"/><rect x="2" y="6" width="1" height="1" fill="#2fe62f"/><rect x="10" y="6" width="1" height="1" fill="#2fe62f"/><rect x="2" y="7" width="2" height="1" fill="#2fe62f"/><rect x="9" y="7" width="2" height="1" fill="#2fe62f"/><rect x="3" y="8" width="7" height="1" fill="#2fe62f"/><rect x="6" y="9" width="1" height="1" fill="#2fe62f"/><rect x="3" y="10" width="7" height="1" fill="#2fe62f"/><rect x="4" y="11" width="5" height="1" fill="#2fe62f"/><rect x="5" y="12" width="3" height="1" fill="#2fe62f"/><rect x="6" y="13" width="1" height="1" fill="#2fe62f"/></svg>
<svg class="a" style="left:52px;top:531px" width="17" height="14" viewBox="0 0 17 14"><defs><linearGradient id="gb2" gradientUnits="userSpaceOnUse" x1="0" y1="0" x2="0" y2="14"><stop offset="0" stop-color="#e01808"/><stop offset="0.5" stop-color="#f08010"/><stop offset="1" stop-color="#fcec20"/></linearGradient></defs><path d="M0.500 13.500 V6.500 H5.500 V1.500 H10.500 V8.500 H15.500 V13.500Z" fill="url(#gb2)" stroke="#7a2800" stroke-width="1"/><path d="M5.500 6.500V13M10.500 8.500V13" stroke="#c05000" stroke-width="0.600"/></svg>
<div class="t" style="left:76.500px;top:533px;font-size:10px;font-weight:bold;letter-spacing:0.2px;color:#e8e8e8;text-shadow:-1px 0 #111,1px 0 #111,0 -1px #111,0 1px #111,-1px -1px #111,1px 1px #111,1px -1px #111,-1px 1px #111">EQ</div>
<div class="a" style="left:103px;top:531px;width:682px;height:1px;background:#fff"></div>
<svg class="a" style="left:107px;top:534px" width="8" height="10" viewBox="0 0 8 10"><path d="M6 1.3 L2.3 5 L6 8.700" fill="none" stroke="#505050" stroke-width="2"/></svg>
<div class="a" style="left:120px;top:532px;width:50px;height:14px;background:#cdcdcd"></div>
<svg class="a" style="left:772px;top:534px" width="8" height="10" viewBox="0 0 8 10"><path d="M2 1.3 L5.700 5 L2 8.700" fill="none" stroke="#505050" stroke-width="2"/></svg>
<div class="a" style="left:0;top:551px;width:791px;height:1px;background:#d7d7d7"></div>
<div class="t"  style="left:0.86px;top:556.25px;font-size:11.5px;letter-spacing:-0.344px;color:#000;font-weight:normal;font-kerning:none;">Ready</div>
<div class="a" style="left:248px;top:553px;width:1px;height:17px;background:#d7d7d7"></div>
<div class="t"  style="left:253.16px;top:556.25px;font-size:11.5px;letter-spacing:0.144px;color:#000;font-weight:normal;font-kerning:none;">Octave: 3-4</div>
<div class="a" style="left:328px;top:553px;width:1px;height:17px;background:#d7d7d7"></div>
<div class="t"  style="left:333.98px;top:556.25px;font-size:11.5px;letter-spacing:0.007px;color:#000;font-weight:normal;font-kerning:none;">Add: 1</div>
<div class="a" style="left:394px;top:553px;width:382px;height:18px;background:#e6e6e6;border:1px solid #c4c4c4"></div>
<div class="a" style="left:788px;top:561px;width:2px;height:2px;background:#b8b8b8"></div>
<div class="a" style="left:785px;top:564px;width:2px;height:2px;background:#b8b8b8"></div>
<div class="a" style="left:788px;top:564px;width:2px;height:2px;background:#b8b8b8"></div>
<div class="a" style="left:782px;top:567px;width:2px;height:2px;background:#b8b8b8"></div>
<div class="a" style="left:785px;top:567px;width:2px;height:2px;background:#b8b8b8"></div>
<div class="a" style="left:788px;top:567px;width:2px;height:2px;background:#b8b8b8"></div>
<div class="a" style="left:792px;top:0;width:1px;height:570px;background:#1f2a48"></div>
<div class="a" style="left:792px;top:0;width:1px;height:31px;background:#55554f"></div>
<div class="a" style="left:791px;top:0;width:1px;height:570px;background:rgba(40,48,80,0.3)"></div>
</body></html>
